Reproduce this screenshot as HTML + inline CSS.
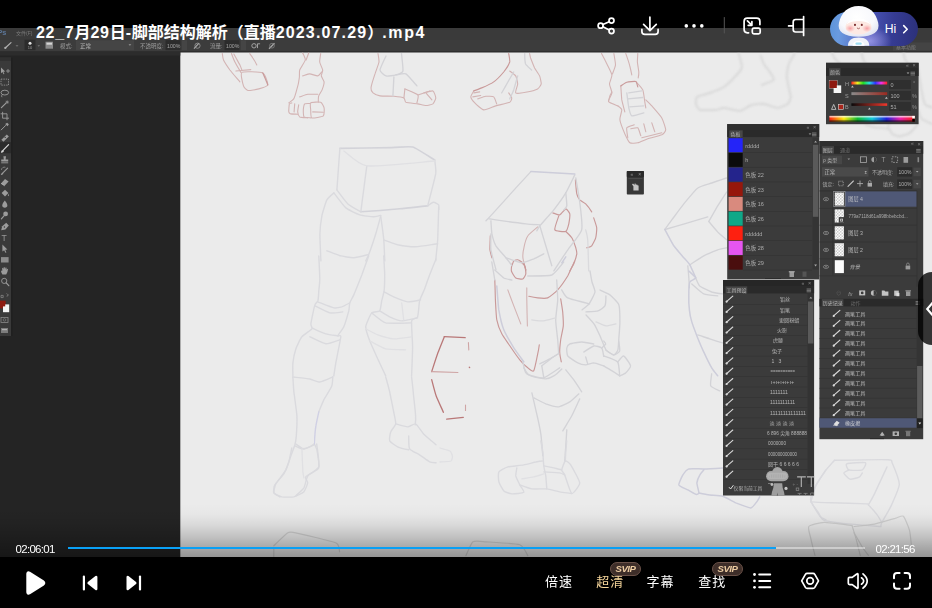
<!DOCTYPE html>
<html lang="zh-CN">
<head>
<meta charset="utf-8">
<title>22_7月29日-脚部结构解析（直播2023.07.29）.mp4</title>
<style>
html,body{margin:0;padding:0;background:#000;}
body{width:932px;height:608px;overflow:hidden;position:relative;font-family:"Liberation Sans","Noto Sans CJK SC",sans-serif;color:#fff;}
#player{position:absolute;left:0;top:0;width:932px;height:608px;overflow:hidden;background:#000;}
#video{position:absolute;left:0;top:0;width:932px;height:608px;display:block;}
.shade-b{position:absolute;left:0;top:504px;width:932px;height:53px;background:linear-gradient(to bottom,rgba(0,0,0,0) 0%,rgba(0,0,0,.02) 20%,rgba(0,0,0,.08) 40%,rgba(0,0,0,.17) 60%,rgba(0,0,0,.27) 80%,rgba(0,0,0,.37) 100%);}
.title{position:absolute;left:36px;top:22px;font-size:16px;line-height:22px;font-weight:bold;white-space:nowrap;color:#fff;}
.title span{letter-spacing:.7px;}
.title span.d{letter-spacing:1.15px;}
.title span.e{letter-spacing:1.6px;margin-left:-1px;}
.time{position:absolute;top:542px;font-size:11.5px;line-height:14px;color:#fff;white-space:nowrap;letter-spacing:-.72px;}
#t1{left:15.6px;}
#t2{left:875.6px;}
.bar{position:absolute;left:67.7px;top:546.8px;width:797px;height:2.5px;background:rgba(255,255,255,.42);}
.bar i{display:block;width:708.5px;height:2.5px;background:#0aa0f5;}
.ctl{position:absolute;font-size:13px;letter-spacing:1px;line-height:18px;top:573.3px;color:#fff;white-space:nowrap;}
.gold{color:#f7d79c;}
.svip{position:absolute;top:562px;width:29.4px;height:11.8px;border:.8px solid #6a5148;border-radius:7px;background:#3e2e29;color:#ecccA2;font-size:9.6px;line-height:12.4px;font-weight:bold;font-style:italic;text-align:center;letter-spacing:-.5px;text-indent:-.5px;}
svg.ic{position:absolute;overflow:visible;}
.handle{position:absolute;left:918.3px;top:272px;width:28px;height:72.6px;border-radius:14px;background:rgba(0,0,0,.78);}
.hi{position:absolute;left:830px;top:11.8px;width:88.2px;height:34px;border-radius:17px;overflow:hidden;background:linear-gradient(96deg,#5b93d9 0%,#6a9be0 12%,#5a78cc 30%,#454fae 50%,#363c94 70%,#2b3079 100%);}
.hi:before{content:"";position:absolute;left:18px;top:14px;width:44px;height:30px;border-radius:50%;background:radial-gradient(closest-side,rgba(170,165,240,.75),rgba(150,150,235,0));}
.hi b{position:absolute;left:54.7px;top:9.4px;font-size:12.2px;line-height:16px;font-weight:normal;color:#fff;}
.blk{position:absolute;left:0;width:932px;background:#000;}

</style>
</head>
<body>
<div id="player">
<svg id="video" width="932" height="608" viewBox="0 0 932 608" font-family="'Liberation Sans','Noto Sans CJK SC',sans-serif">
<defs>
<linearGradient id="hue" x1="0" x2="1" y1="0" y2="0"><stop offset="0" stop-color="#f22"/><stop offset=".17" stop-color="#ee2"/><stop offset=".33" stop-color="#2d2"/><stop offset=".5" stop-color="#2dd"/><stop offset=".67" stop-color="#33f"/><stop offset=".83" stop-color="#e3e"/><stop offset="1" stop-color="#f22"/></linearGradient>
<linearGradient id="sat" x1="0" x2="1" y1="0" y2="0"><stop offset="0" stop-color="#8a8a8a"/><stop offset="1" stop-color="#9a2a20"/></linearGradient>
<linearGradient id="bri" x1="0" x2="1" y1="0" y2="0"><stop offset="0" stop-color="#0a0a0a"/><stop offset="1" stop-color="#f0382c"/></linearGradient>
<linearGradient id="spec" x1="0" x2="1" y1="0" y2="0"><stop offset="0" stop-color="#f21"/><stop offset=".17" stop-color="#fe1"/><stop offset=".33" stop-color="#1b3"/><stop offset=".5" stop-color="#1cd"/><stop offset=".67" stop-color="#22d"/><stop offset=".83" stop-color="#e2a"/><stop offset="1" stop-color="#f21"/></linearGradient>
<linearGradient id="specv" x1="0" x2="0" y1="0" y2="1"><stop offset="0" stop-color="#fff" stop-opacity=".85"/><stop offset=".45" stop-color="#fff" stop-opacity="0"/><stop offset=".6" stop-color="#000" stop-opacity="0"/><stop offset="1" stop-color="#000" stop-opacity=".8"/></linearGradient>
<pattern id="chk" width="3" height="3" patternUnits="userSpaceOnUse"><rect width="1.5" height="1.5" fill="#cdcdcd"/><rect x="1.5" y="1.5" width="1.5" height="1.5" fill="#cdcdcd"/></pattern>
<clipPath id="cv"><rect x="180.3" y="52.3" width="752" height="505"/></clipPath>
<filter id="soft" color-interpolation-filters="sRGB" x="-5%" y="-5%" width="110%" height="110%"><feGaussianBlur stdDeviation=".45"/></filter>
<filter id="soft2" color-interpolation-filters="sRGB" x="-5%" y="-5%" width="110%" height="110%"><feGaussianBlur stdDeviation=".9"/></filter>
<filter id="soft3" color-interpolation-filters="sRGB" x="0" y="0" width="932" height="608" filterUnits="userSpaceOnUse"><feGaussianBlur stdDeviation=".42"/></filter>
<filter id="softg" color-interpolation-filters="sRGB" x="-5%" y="-5%" width="110%" height="110%"><feGaussianBlur stdDeviation=".6"/></filter>
</defs>
<rect x="0" y="27" width="932" height="531" fill="#ebebeb"/>
<g id="chrome" filter="url(#soft3)">
<rect x="0" y="27" width="932" height="25.3" fill="#3a3a3a" />
<rect x="0" y="40" width="932" height="11.4" fill="#3c3c3c" />
<rect x="0" y="51.3" width="932" height="1" fill="#2a2a2a" />
<rect x="0" y="52" width="180.3" height="506" fill="#242424" />
<rect x="0" y="52" width="180.3" height="3.6" fill="#2c2c2c" />
<text x="-2.6" y="35.2" font-size="7.4" fill="#6485b0" opacity=".8" text-anchor="start" font-weight="bold">Ps</text>
<text x="16" y="34.6" font-size="5" fill="#8a8a8a" opacity=".8" text-anchor="start" >文件(F)</text>
<g transform="translate(0 -.8)">
<path d="M5 49L11 43.4" stroke="#b0b0b0" stroke-width="1.2" stroke-linecap="round"/><circle cx="5.4" cy="48.6" r="1.1" fill="#b0b0b0"/>
<path d="M15.5 46l1.5 1.6 1.5-1.6z" fill="#777"/>
<rect x="24.5" y="40.5" width="11" height="10.5" fill="#2c2c2c" />
<circle cx="30" cy="44" r="1.5" fill="#e0e0e0"/>
<text x="30" y="50" font-size="4" fill="#bbb" opacity=".8" text-anchor="middle" >10</text>
<path d="M37.5 46l1.3 1.5 1.3-1.5z" fill="#777"/>
<rect x="45.5" y="42.5" width="7.5" height="7" fill="#8a8a8a" />
<rect x="46.5" y="43.5" width="5.5" height="2" fill="#d5d5d5" />
<text x="60" y="48.6" font-size="5.5" fill="#b5b5b5" opacity=".8" text-anchor="start" >模式:</text>
<rect x="76" y="41" width="58" height="10" fill="#454545" />
<text x="80" y="48.6" font-size="5.5" fill="#c8c8c8" opacity=".8" text-anchor="start" >正常</text>
<path d="M128.5 45l1.4 1.6 1.4-1.6z" fill="#999"/>
<text x="140" y="48.6" font-size="5.5" fill="#b5b5b5" opacity=".8" text-anchor="start" >不透明度:</text>
<rect x="165.5" y="41" width="15" height="10" fill="#2c2c2c" />
<text x="167" y="48.6" font-size="5.2" fill="#c0c0c0" opacity=".8" text-anchor="start" >100%</text>
<rect x="182" y="41" width="5" height="10" fill="#454545" />
<path d="M194 49.5l5-5.5" stroke="#aaa" stroke-width="1.2"/><circle cx="197.5" cy="46.5" r="2.6" fill="none" stroke="#999" stroke-width=".8"/>
<text x="210" y="48.6" font-size="5.5" fill="#b5b5b5" opacity=".8" text-anchor="start" >流量:</text>
<rect x="224.5" y="41" width="15" height="10" fill="#2c2c2c" />
<text x="226" y="48.6" font-size="5.2" fill="#c0c0c0" opacity=".8" text-anchor="start" >100%</text>
<rect x="241" y="41" width="5" height="10" fill="#454545" />
<circle cx="254" cy="46.6" r="2.2" fill="none" stroke="#aaa" stroke-width=".9"/><path d="M257.5 44.5v4.4M257.5 44.6h2.6" stroke="#aaa" stroke-width=".9"/>
<path d="M269 49.5l5.5-5.5" stroke="#aaa" stroke-width="1.3"/><circle cx="272" cy="46.5" r="2.4" fill="none" stroke="#888" stroke-width=".7"/>
</g>
<rect x="893" y="42.5" width="39" height="8" fill="#444" />
<text x="896" y="48.6" font-size="5" fill="#8f8f8f" opacity=".8" text-anchor="start" >基本功能</text>
<rect x="0" y="57.6" width="11.3" height="278.4" fill="#3a3a3a" />
<rect x="0" y="57.6" width="11.3" height="3.2" fill="#303030" />
<rect x="11.3" y="57.6" width="0.9" height="278.4" fill="#1d1d1d" />
<rect x="0" y="142.2" width="11" height="11" fill="#2b2b2b" />
<path d="M1 67.5l4.2 4-1.8.2 1 2.2-.9.4-1-2.2-1.5 1.2z" fill="#9c9c9c"/><path d="M6 71.0h4M8 69.0v4" stroke="#9c9c9c" stroke-width=".8"/>
<rect x="1" y="79.1" width="7.5" height="6" fill="none" stroke="#9c9c9c" stroke-width=".8" stroke-dasharray="1.4 1"/>
<ellipse cx="4.8" cy="92.60000000000001" rx="3.8" ry="2.4" fill="none" stroke="#9c9c9c" stroke-width=".9"/><path d="M2.4 94.4q-1.6 1.6-.4 2.8" stroke="#9c9c9c" stroke-width=".8" fill="none"/>
<path d="M1.4 107.7L6 103.1" stroke="#9c9c9c" stroke-width="1.2" stroke-linecap="round"/><path d="M7.2 100.3v3.6M5.4 102.1h3.6M6 100.89999999999999l2.4 2.4M8.4 100.89999999999999l-2.4 2.4" stroke="#9c9c9c" stroke-width=".6"/>
<path d="M2.6 111.80000000000001v6.4h6.4M.6 113.80000000000001h6.4v6.4" stroke="#9c9c9c" stroke-width=".9" fill="none"/>
<path d="M1.2 129.9l4.4-4.4" stroke="#9c9c9c" stroke-width="1" stroke-linecap="round"/><path d="M5.2 123.9l2.4 2.4 1.2-2-1.6-1.6z" fill="#9c9c9c"/>
<path d="M1.4 139.79999999999998l5.4-5.4 2 2-5.4 5.4z" fill="#9c9c9c"/><circle cx="5.2" cy="137.4" r=".7" fill="#3a3a3a"/>
<path d="M3 150.29999999999998L8.6 144.7" stroke="#d8d8d8" stroke-width="1.2" stroke-linecap="round"/><path d="M.8 152.7q.2-2.6 2.2-2.8l1 1q-.4 2-3.2 1.8z" fill="#d8d8d8"/>
<path d="M3.4 156.20000000000002h2.6l-.4 3.2h2.6v2h-7v-2h2.6z" fill="#9c9c9c"/><path d="M1.2 162.8h7" stroke="#9c9c9c" stroke-width=".9"/>
<path d="M2.4 173.3L7.6 168.1" stroke="#9c9c9c" stroke-width="1.1" stroke-linecap="round"/><path d="M.8 174.9q.2-2 1.8-2.2l.8.8q-.4 1.6-2.6 1.4z" fill="#9c9c9c"/><path d="M1.4 169.9a3 3 0 0 1 4-2.6" stroke="#9c9c9c" stroke-width=".7" fill="none"/>
<path d="M1 183.4l4-4.4 3.6 2.4-4 4.4z" fill="#9c9c9c"/><path d="M1 183.4l3.6 2.4" stroke="#d0d0d0" stroke-width=".6"/>
<path d="M1.6 193.1l3.4-3.4 3.4 3.4-3.4 3.4z" fill="#9c9c9c"/><path d="M8.4 193.7q1.2 1.6 0 2.6q-1.2-1 0-2.6z" fill="#9c9c9c"/>
<path d="M4.8 200.39999999999998q3.6 4.4 2.2 6.4q-2.2 2-4.4 0q-1.4-2 2.2-6.4z" fill="#9c9c9c"/>
<circle cx="5.6" cy="213.9" r="2.4" fill="#9c9c9c"/><path d="M1.4 218.9l2.6-3" stroke="#9c9c9c" stroke-width="1.2" stroke-linecap="round"/>
<path d="M1.2 230.20000000000002l1-4 4-3.4 2.6 2.6-3.4 4z" fill="#9c9c9c"/><circle cx="4.4" cy="227.0" r=".7" fill="#3a3a3a"/>
<text x="1.6" y="240.7" font-size="8.6" fill="#b0b0b0" opacity=".8" text-anchor="start" >T</text>
<path d="M2.4 244.6l5 5-2.2.2 1.2 2.6-1 .4-1.2-2.6-1.8 1.4z" fill="#9c9c9c"/>
<rect x="1" y="257.09999999999997" width="7.6" height="5.4" fill="#8c8c8c"/>
<path d="M2.4 274.6q-1.6-2.4-1.4-4l1.2.4v-3l1-.2.2 1.6.4-2.2 1 0 .2 2.2.6-1.8 1 .2-.2 2.2.8-1.2.8.4q-.4 3.400-1.800 5.400z" fill="#9c9c9c"/>
<circle cx="4.2" cy="280.9" r="2.6" fill="none" stroke="#9c9c9c" stroke-width=".9"/><path d="M6.200 282.9l2.600 2.800" stroke="#9c9c9c" stroke-width="1.2" stroke-linecap="round"/>
<path d="M1 295.400h2.200v2.200h-2.200zM6.600 293.400l1.400 1.400M6.600 296.200q1.800 0 1.600-1.600" stroke="#9a9a9a" stroke-width=".6" fill="none"/>
<rect x="0" y="300.8" width="5.6" height="7.6" fill="#8d1a10" />
<rect x="3" y="304.4" width="6.2" height="7.8" fill="#f4f4f4" />
<rect x="0" y="300.8" width="5.2" height="5.6" fill="#8d1a10" />
<rect x="1" y="317.4" width="7" height="5" fill="none" stroke="#8a8a8a" stroke-width=".8"/>
<circle cx="4.500" cy="319.900" r="1.300" fill="none" stroke="#8a8a8a" stroke-width=".6"/>
<rect x="1" y="328" width="7" height="5" fill="#7c7c7c" />
<rect x="2" y="329" width="5" height="1.2" fill="#b0b0b0" />
</g>
<g id="drawing" fill="none" stroke-linecap="round" stroke-linejoin="round" clip-path="url(#cv)">
<g stroke="#d3b4b4" stroke-width="1.1" filter="url(#soft)">
<path d="M222.3 53.6C222.4 54.2 222.8 58.5 223.5 60.0C224.2 61.5 228.4 67.9 229.9 70.0C231.4 72.0 239.0 80.8 239.9 81.9"/>
<path d="M231.5 53.6C231.8 54.4 234.0 60.3 234.9 62.0C235.7 63.7 240.3 71.4 240.9 72.4"/>
<path d="M233.9 54.0C234.4 55.0 239.1 63.5 239.9 65.0C240.6 66.4 241.7 69.5 241.9 70.0"/>
<path d="M249.8 53.6C250.1 54.0 252.2 56.9 252.8 58.0C253.5 59.0 256.5 64.3 256.8 65.0"/>
<path d="M235.9 71.0 L250.8 69.6"/>
<path d="M241.9 72.4C243.6 71.2 260.4 71.8 262.8 72.9C265.2 74.1 268.2 83.5 267.8 84.9C267.4 86.4 260.7 88.4 258.8 88.9C257.0 89.4 249.3 90.8 247.9 90.5C246.4 90.2 244.0 87.6 243.5 85.9C242.9 84.3 240.1 73.5 241.9 72.4"/>
<path d="M302.7 53.0C303.0 53.6 305.6 58.4 305.3 60.0C305.0 61.5 300.3 68.3 299.7 70.0C299.2 71.6 299.6 76.1 299.3 77.9C299.1 79.8 297.3 88.0 296.7 89.9C296.2 91.8 294.5 97.7 293.7 98.9C293.0 100.1 289.2 102.5 288.8 102.9"/>
<path d="M308.7 53.0 L306.1 60.0"/>
<path d="M320.7 53.6C320.6 54.4 319.5 60.5 319.7 62.0C319.9 63.5 322.5 68.7 322.7 70.0C322.8 71.2 321.2 74.8 321.3 75.9C321.4 77.0 324.0 80.6 324.1 81.9C324.2 83.2 322.6 88.6 322.1 89.9C321.6 91.2 319.0 94.8 318.7 95.9C318.3 97.0 318.3 101.7 318.3 102.3"/>
<path d="M302.7 75.9C303.4 75.8 308.3 73.9 309.7 73.9C311.1 73.9 316.6 76.1 317.7 75.9C318.8 75.8 321.3 72.3 321.7 72.0"/>
<path d="M299.7 96.9C300.5 96.7 306.1 94.5 307.7 94.3C309.4 94.1 316.8 94.3 317.7 94.3"/>
<path d="M310.7 102.9C311.6 102.2 319.5 101.8 320.7 102.3C321.9 102.7 323.8 106.6 324.1 107.9C324.3 109.1 324.4 114.9 323.3 115.9C322.2 116.8 312.9 118.4 311.7 117.9C310.6 117.3 310.8 111.2 310.7 109.9C310.6 108.5 309.8 103.6 310.7 102.9"/>
<path d="M312.7 111.9 L323.3 112.3"/>
<path d="M309.7 103.5C309.3 103.5 305.3 103.3 304.7 103.9C304.1 104.5 303.4 108.7 303.3 109.9C303.3 111.1 303.5 116.1 304.1 116.9C304.8 117.6 310.1 117.8 310.7 117.9"/>
<path d="M298.7 104.9C298.6 105.5 297.6 110.8 297.7 111.9C297.8 113.0 298.8 116.3 299.7 116.9C300.7 117.4 307.0 117.8 307.7 117.9"/>
<path d="M291.8 102.9C291.5 103.0 289.6 103.1 289.4 103.9C289.1 104.7 288.6 110.9 288.8 111.9C288.9 112.8 289.9 113.6 290.8 113.9C291.6 114.1 297.1 114.2 297.7 114.3"/>
<path d="M294.7 103.9 L294.1 111.9"/>
<path d="M378.0 53.6C378.1 54.4 379.2 60.1 379.0 62.0C378.7 63.8 375.7 71.6 375.0 73.9C374.2 76.3 371.2 86.2 371.0 87.9C370.8 89.7 372.2 92.2 373.0 92.9C373.8 93.6 378.0 95.6 380.0 95.9C381.9 96.2 391.7 96.1 393.9 96.3C396.1 96.5 402.8 97.3 403.9 97.9C405.0 98.4 404.6 101.7 405.9 102.3C407.2 102.8 416.1 103.6 417.9 103.9C419.7 104.2 424.5 105.5 425.9 105.5C427.2 105.5 431.9 104.6 432.9 103.9C433.8 103.2 435.8 99.1 435.8 97.9C435.8 96.7 434.0 91.4 432.9 90.9C431.8 90.5 424.7 92.7 423.9 92.9"/>
<path d="M404.9 88.9 L403.9 97.9"/>
<path d="M404.9 88.9C406.1 89.5 416.8 93.6 417.9 94.9C419.0 96.2 417.0 102.2 416.9 102.9"/>
<path d="M417.9 94.9 L429.9 90.9"/>
<path d="M425.9 92.9 L431.9 99.9"/>
<path d="M473.8 90.9C473.5 91.5 470.7 95.8 470.8 96.9C470.9 98.0 473.6 101.7 474.8 102.9C475.9 104.1 481.8 109.6 483.7 109.9C485.7 110.1 493.3 106.6 495.7 105.9C498.1 105.2 508.2 103.0 509.7 102.3C511.1 101.6 511.8 98.8 511.7 97.9C511.6 97.0 509.0 93.4 508.7 92.9"/>
<path d="M473.8 92.9 L479.7 91.9"/>
<path d="M472.8 96.9 L480.7 95.5"/>
<path d="M477.8 98.9C478.5 98.7 484.3 96.5 485.7 96.3C487.2 96.1 492.7 96.2 493.7 96.9C494.7 97.6 496.4 103.2 496.7 103.9"/>
<path d="M509.7 71.0C510.2 71.4 514.9 74.8 515.7 75.9C516.4 77.1 517.7 82.4 517.7 83.9C517.7 85.5 514.9 92.1 515.7 92.9C516.4 93.7 523.6 92.7 525.6 92.3C527.7 91.9 536.2 89.7 537.6 88.9C539.0 88.1 541.0 85.1 541.2 83.9C541.4 82.7 540.2 77.4 539.6 75.9C539.0 74.5 535.5 69.6 534.6 68.0C533.8 66.3 531.1 59.3 530.6 58.0C530.2 56.7 529.7 54.0 529.6 53.6"/>
<path d="M601.5 53.6C602.0 54.5 605.9 62.0 606.9 64.0C607.8 65.9 611.6 73.1 611.9 74.9C612.1 76.8 609.5 82.3 609.5 83.9C609.5 85.6 612.0 91.3 611.9 92.9C611.8 94.5 607.9 100.3 608.5 101.5C609.0 102.7 617.0 105.5 617.9 105.9"/>
<path d="M613.9 53.6C614.0 54.6 615.6 63.1 615.5 65.0C615.3 66.8 612.7 73.1 612.5 73.9"/>
<path d="M625.8 53.6C626.2 54.7 629.3 64.0 629.8 66.0C630.4 67.9 631.6 74.1 631.8 74.9"/>
<path d="M637.8 53.6C637.8 54.4 637.3 60.3 637.4 62.0C637.5 63.7 638.7 70.5 638.8 72.0C638.9 73.4 638.3 77.4 638.2 77.9"/>
<path d="M620.8 85.9C620.9 87.2 621.5 97.5 621.8 99.9C622.2 102.3 624.6 110.8 624.8 111.9"/>
<path d="M635.8 81.5C636.5 82.3 642.0 88.0 642.8 89.9C643.6 91.8 644.5 100.2 644.8 101.9C645.1 103.5 645.7 107.3 645.8 107.9"/>
<path d="M608.5 101.5C608.6 101.0 609.6 96.8 609.9 95.9C610.2 95.0 611.7 92.3 611.9 91.9"/>
<path d="M617.9 105.9C618.2 106.2 621.7 108.6 621.8 109.9C622.0 111.1 619.6 117.7 619.9 119.8C620.1 122.0 623.9 131.7 624.8 133.8C625.8 135.9 628.6 142.0 629.8 142.8C631.0 143.6 636.2 143.2 637.8 142.8C639.5 142.4 645.6 139.5 647.8 138.8C650.0 138.1 660.1 135.6 661.8 134.8C663.4 134.0 665.7 131.4 665.7 129.8C665.7 128.3 663.0 120.0 661.8 117.9C660.5 115.7 653.2 107.5 651.8 105.9C650.3 104.2 646.3 100.4 645.8 99.9"/>
<path d="M634.2 124.8C633.5 125.1 627.4 126.6 626.8 127.8C626.2 129.0 627.7 136.9 627.8 137.8"/>
<path d="M630.8 128.8C631.5 128.7 636.9 127.2 637.8 127.8C638.7 128.5 640.5 135.1 640.8 135.8"/>
<path d="M643.8 123.8 L645.8 131.8"/>
<path d="M651.8 122.8 L654.8 131.8"/>
<path d="M641.8 137.8 L661.8 132.8"/>
<path d="M537.8 226.8C536.9 227.7 529.1 233.9 527.9 235.8C526.6 237.7 524.3 245.8 523.9 247.8C523.4 249.8 522.7 255.6 522.9 257.8C523.1 259.9 525.6 269.7 525.9 270.9"/>
<path d="M507.8 289.9C508.4 291.4 512.6 302.8 513.8 305.9C515.0 309.0 520.1 322.2 520.8 323.9"/>
<path d="M526.8 287.9C526.8 289.0 526.7 296.4 526.8 299.9C526.8 303.4 527.3 323.5 527.4 325.9"/>
</g>
<g stroke="#c99999" stroke-width="1.15" filter="url(#soft)">
<path d="M262.8 72.9C263.1 73.6 265.4 78.8 265.8 79.9C266.3 81.0 267.6 84.5 267.8 84.9"/>
<path d="M508.7 53.6C508.8 54.4 510.1 60.3 509.7 62.0C509.2 63.7 505.2 70.1 503.7 72.0C502.2 73.8 495.7 80.5 493.7 81.9C491.7 83.4 483.6 87.1 481.7 87.9C479.9 88.7 474.5 90.6 473.8 90.9"/>
<path d="M620.8 85.9C621.4 85.6 625.5 82.7 626.8 82.3C628.2 81.9 634.8 81.1 635.8 81.5C636.8 82.0 637.6 86.4 637.8 86.9"/>
<path d="M575.4 179.9C575.5 181.2 576.4 192.1 576.8 193.9C577.2 195.7 578.9 199.0 579.7 199.9C580.6 200.8 584.6 202.8 585.7 203.9C586.8 205.0 591.2 211.1 591.7 211.9"/>
<path d="M593.7 217.9C594.0 218.8 596.5 226.0 596.7 227.8C596.9 229.7 596.2 236.2 595.7 237.8C595.3 239.5 592.5 244.9 591.7 245.8C590.9 246.7 587.2 247.6 586.7 247.8"/>
<path d="M552.8 212.9C553.4 213.0 558.6 215.2 559.8 214.9C561.0 214.5 564.9 209.0 565.8 208.9C566.7 208.8 569.5 212.5 569.8 213.9C570.0 215.2 569.1 222.2 568.8 223.8C568.4 225.4 567.1 230.9 565.8 231.4C564.5 232.0 555.4 231.3 554.8 229.8C554.2 228.4 558.4 217.1 558.8 215.9"/>
<path d="M565.8 231.4C566.3 232.0 570.9 236.3 571.8 237.8C572.7 239.3 575.3 246.3 575.8 247.8C576.2 249.2 576.9 252.3 576.8 253.8C576.6 255.2 574.4 262.2 573.8 263.7C573.1 265.3 570.1 270.3 569.8 270.9"/>
<path d="M490.3 235.8C490.3 237.1 489.8 247.8 489.9 249.8C490.1 251.8 491.8 257.0 491.9 257.8"/>
<path d="M511.9 265.7C512.1 265.3 513.3 261.3 513.9 260.8C514.4 260.2 517.0 259.5 517.9 259.8C518.8 260.0 523.1 262.8 523.9 263.7C524.6 264.7 525.7 269.2 525.9 269.7"/>
<path d="M511.8 264.0C511.8 264.6 511.0 269.7 511.4 271.0C511.8 272.3 514.7 277.2 515.8 278.0C516.8 278.7 521.9 279.3 522.8 279.0C523.7 278.6 525.6 275.2 525.8 274.0C526.0 272.8 525.3 267.2 524.8 266.0C524.2 264.8 520.2 261.5 519.8 261.0"/>
<path d="M494.8 280.0C494.9 281.8 495.3 296.3 495.4 299.9C495.6 303.6 496.2 316.8 496.8 319.9C497.4 323.0 500.6 331.5 501.8 333.8C503.0 336.2 508.2 343.4 509.8 345.8C511.4 348.2 518.1 357.8 519.8 359.8C521.4 361.8 526.5 366.8 527.8 367.8C529.0 368.8 532.8 372.0 533.7 370.8C534.7 369.5 537.2 356.2 537.7 353.8C538.3 351.4 539.2 345.6 539.3 344.8"/>
<path d="M574.7 261.0C574.0 262.4 569.2 273.3 567.7 276.0C566.1 278.6 559.5 287.9 557.7 289.9C555.9 291.9 549.5 297.2 547.7 297.9C545.9 298.6 539.5 298.1 537.7 297.9C536.0 297.8 529.6 296.5 528.8 296.3"/>
<path d="M560.7 298.9C560.9 300.1 562.4 309.4 562.7 311.9C562.9 314.4 563.5 323.3 563.3 325.9C563.1 328.4 561.0 337.4 560.7 339.8C560.4 342.2 559.6 349.8 559.7 351.8C559.7 353.8 561.1 360.9 561.3 361.8"/>
</g>
<g stroke="#d3d3d7" stroke-width="1.35" filter="url(#softg)">
<path d="M386.0 56.0C385.4 57.3 380.0 68.1 380.0 70.0C380.0 71.8 384.5 75.5 386.0 75.9C387.4 76.4 394.4 75.4 395.9 74.9C397.5 74.5 402.4 72.9 402.9 71.0C403.4 69.0 401.6 55.2 401.5 53.6"/>
<path d="M393.9 76.9 L392.9 95.9"/>
<path d="M395.9 74.9C396.8 74.9 404.0 72.9 405.9 73.9C407.8 75.0 415.9 84.8 416.9 85.9"/>
<path d="M524.7 53.6C524.7 54.5 525.0 62.5 525.6 64.0C526.3 65.5 531.1 69.4 531.6 70.0"/>
<path d="M513.7 72.0C512.9 73.2 506.8 84.0 505.7 85.9C504.6 87.8 502.1 92.3 501.7 92.9"/>
<path d="M517.7 75.9C517.3 77.2 514.4 87.8 513.7 89.9C512.9 92.0 510.0 98.1 509.7 98.9"/>
<path d="M626.8 92.9C627.0 94.3 628.4 105.8 628.8 107.9C629.3 110.0 630.5 115.4 631.8 115.9C633.2 116.3 642.7 113.1 643.8 112.9"/>
<path d="M628.8 92.9 L641.8 90.9"/>
<path d="M627.8 98.9 L642.8 97.5"/>
<path d="M629.8 106.9 L643.8 105.9"/>
<path d="M530.9 171.6C529.5 173.1 518.9 184.6 515.9 187.9C512.9 191.2 500.7 204.9 497.9 207.9C495.2 210.9 487.1 219.7 486.0 220.8"/>
<path d="M488.9 218.8C489.6 218.9 492.5 219.4 495.9 219.8C499.3 220.3 521.8 223.4 525.9 223.8C529.9 224.3 538.6 224.7 539.8 224.8"/>
<path d="M574.8 174.9C573.9 176.6 567.7 189.7 565.8 192.9C563.9 196.1 556.2 206.8 553.8 209.9C551.4 212.9 541.4 223.9 539.8 225.8C538.3 227.8 537.1 230.4 536.8 230.8"/>
<path d="M490.9 220.8C491.0 222.0 491.5 231.5 491.9 233.8C492.4 236.1 494.7 243.6 495.9 245.8C497.2 248.0 504.4 255.9 505.9 257.8C507.4 259.6 511.4 265.0 511.9 265.7"/>
<path d="M490.9 233.8C490.9 235.3 490.5 246.5 490.9 249.8C491.4 253.1 495.5 267.9 495.9 269.7"/>
<path d="M575.8 177.9C576.1 180.1 579.2 197.1 579.7 201.9C580.3 206.6 582.8 225.4 581.7 229.8C580.6 234.2 570.3 246.0 567.8 249.8C565.2 253.5 555.1 269.0 553.8 270.9"/>
<path d="M565.8 192.9C565.9 194.1 567.0 204.3 566.8 205.9C566.6 207.4 564.1 209.5 563.8 209.9"/>
<path d="M539.8 225.8C540.4 227.7 544.7 242.1 545.8 245.8C546.9 249.4 551.3 263.9 551.8 265.7"/>
<path d="M505.9 257.8C507.4 258.2 519.3 262.7 521.9 262.8C524.4 262.8 531.8 259.6 533.9 258.8C535.9 257.9 542.9 254.2 543.8 253.8"/>
<path d="M527.8 276.0C530.0 275.9 548.4 276.2 551.7 275.0C555.0 273.7 562.6 263.2 563.7 262.0"/>
<path d="M556.7 280.0C556.8 281.8 557.8 296.3 557.7 299.9C557.6 303.6 555.7 316.2 555.7 319.9C555.7 323.5 557.4 336.7 557.7 339.8C558.0 342.9 558.6 352.5 558.7 353.8"/>
<path d="M523.8 367.8C524.2 368.4 526.9 373.8 528.8 374.7C530.6 375.7 540.9 378.4 543.7 377.7C546.6 377.1 558.2 368.7 559.7 367.8"/>
<path d="M539.7 363.8C540.7 363.3 548.0 359.7 549.7 358.8C551.5 357.9 557.9 354.3 558.7 353.8"/>
<path d="M491.8 262.0 L494.8 280.0"/>
<path d="M494.8 270.0C495.7 270.7 502.3 277.0 503.8 278.0C505.4 278.9 511.1 279.8 511.8 280.0"/>
<path d="M589.6 303.9C587.6 303.4 570.2 299.2 567.7 297.9C565.1 296.6 562.2 290.7 561.7 289.9"/>
<path d="M522.9 362.0C523.1 363.0 524.9 371.6 525.9 372.9C526.9 374.3 532.0 376.4 533.9 376.9C535.7 377.5 544.0 379.0 545.8 378.9C547.7 378.8 552.3 376.8 553.8 375.9C555.3 375.0 561.1 369.6 561.8 368.9"/>
<path d="M541.8 365.9C542.7 365.2 550.3 359.1 551.8 358.0C553.3 356.9 557.2 354.3 557.8 354.0"/>
<path d="M541.8 365.9 L543.8 377.9"/>
<path d="M531.9 392.9C532.2 394.4 535.0 406.1 535.8 409.8C536.7 413.6 540.2 429.6 540.8 433.8C541.5 438.0 542.6 453.7 542.8 455.7"/>
<path d="M565.8 369.9C566.5 370.8 572.3 377.9 573.8 379.9C575.2 381.9 581.0 390.8 581.7 391.9"/>
<path d="M579.7 398.9C579.0 400.4 573.3 412.9 571.8 415.8C570.2 418.8 563.6 429.4 562.8 430.8"/>
<path d="M533.9 397.9C534.9 398.4 543.6 403.0 545.8 403.9C548.0 404.7 555.6 407.0 557.8 406.9C560.0 406.7 567.9 403.1 569.8 401.9C571.7 400.7 577.9 394.6 578.8 393.9"/>
<path d="M566.8 429.8C566.7 431.3 566.0 442.9 565.8 445.8C565.6 448.6 564.9 459.5 564.8 460.9"/>
<path d="M593.7 344.0C592.6 343.8 583.9 342.0 581.7 342.0C579.6 342.0 571.1 343.4 569.8 344.0C568.4 344.5 567.0 346.9 566.8 348.0C566.6 349.1 566.8 354.6 567.8 356.0C568.8 357.3 576.1 362.1 577.8 362.9C579.4 363.8 584.3 364.9 585.7 364.9C587.2 364.9 592.1 362.9 593.7 362.9C595.4 363.0 602.8 365.7 603.7 365.9"/>
<path d="M583.7 352.0C584.7 351.4 592.1 346.4 593.7 346.0C595.4 345.6 600.8 347.1 601.7 348.0C602.6 348.9 603.5 355.2 603.7 356.0"/>
<path d="M585.7 357.0 L587.7 363.9"/>
<path d="M601.7 348.0C602.1 347.6 605.5 344.6 605.7 344.0C605.9 343.4 603.9 341.3 603.7 341.0"/>
<path d="M603.7 356.0C605.0 356.5 616.2 360.1 617.7 362.0C619.1 363.8 619.5 374.6 619.7 375.9"/>
<path d="M603.7 365.9C604.6 366.5 612.2 371.0 613.7 371.9C615.1 372.8 619.1 375.6 619.7 375.9"/>
<path d="M617.7 362.0C618.2 361.4 622.5 355.6 623.7 356.0C624.8 356.3 630.5 364.4 630.6 365.9C630.8 367.5 626.7 372.0 625.6 372.9C624.6 373.8 620.2 375.6 619.7 375.9"/>
<path d="M605.7 350.0C606.4 350.4 612.4 354.9 613.7 355.0C615.0 355.1 619.2 352.3 619.7 351.0C620.1 349.7 618.8 341.9 618.7 341.0"/>
<path d="M726.7 178.0C725.3 178.4 714.4 182.1 711.8 183.0C709.1 183.9 700.3 186.0 697.8 188.0C695.2 189.9 686.2 201.0 683.8 203.9C681.4 206.9 673.6 217.5 671.8 219.9C670.1 222.2 665.5 228.6 664.9 229.5"/>
<path d="M664.9 229.5C667.0 228.9 683.9 224.0 687.8 222.9C691.7 221.7 705.9 217.4 707.8 216.9"/>
<path d="M708.8 221.5C709.6 220.1 716.1 208.6 717.7 205.9C719.4 203.2 725.9 193.2 726.7 192.0"/>
<path d="M708.8 221.5C709.6 222.4 716.1 230.2 717.7 231.9C719.4 233.5 725.9 239.1 726.7 239.8"/>
<path d="M689.8 264.8C691.1 264.0 701.2 257.2 703.8 255.8C706.3 254.4 715.6 250.6 717.7 249.8C719.8 249.1 725.9 248.0 726.7 247.8"/>
<path d="M687.8 265.8C687.9 266.9 688.7 275.8 688.8 277.8C689.0 279.8 689.3 286.8 689.4 287.7"/>
<path d="M695.7 278.0C696.1 278.7 698.3 284.7 699.7 286.0C701.2 287.2 709.6 291.2 711.7 292.0C713.8 292.7 721.7 293.8 722.7 293.9"/>
<path d="M691.8 284.0C692.9 284.9 701.3 292.8 703.7 293.9C706.1 295.0 716.4 295.8 717.7 295.9"/>
<path d="M697.7 334.9C698.8 335.2 707.4 338.1 709.7 338.8C712.0 339.6 721.5 342.5 722.7 342.8"/>
<path d="M711.7 373.8C711.6 374.9 710.0 384.2 710.7 385.7C711.4 387.3 718.9 390.5 719.7 390.9"/>
<path d="M590.0 271.0C590.2 272.0 591.5 280.1 592.0 282.0C592.4 283.9 595.2 289.9 595.0 292.0C594.7 294.0 590.2 302.3 589.0 303.9C587.8 305.6 582.6 309.4 582.0 309.9"/>
<path d="M600.0 290.0C600.9 290.4 608.2 293.6 609.9 294.9C611.7 296.3 618.0 302.5 618.9 304.9C619.8 307.4 619.9 318.9 619.9 321.9C619.9 324.9 619.1 335.3 618.9 337.9C618.7 340.4 618.4 348.3 617.9 349.8C617.5 351.4 615.0 354.8 613.9 354.8C612.8 354.8 607.2 351.6 605.9 349.8C604.7 348.1 601.1 338.2 600.0 335.9C598.9 333.5 595.2 325.8 594.0 323.9C592.7 322.0 586.7 315.7 586.0 314.9"/>
<path d="M605.9 295.9C605.9 296.9 605.7 304.5 604.9 305.9C604.2 307.3 599.7 310.4 598.0 310.9C596.2 311.5 587.1 311.8 586.0 311.9"/>
</g>
<g stroke="#d6d6d6" stroke-width="1.7" filter="url(#soft2)">
<path d="M738.9 53.6C739.1 54.4 740.6 60.7 740.9 62.0C741.1 63.3 742.5 66.5 741.9 68.0C741.2 69.4 735.5 76.2 733.9 77.9C732.2 79.7 726.1 85.5 723.9 86.9C721.7 88.3 712.4 92.0 709.9 92.9C707.5 93.8 698.2 95.9 697.0 96.9C695.7 97.9 695.7 102.7 696.0 103.9C696.2 105.1 698.1 109.3 700.0 109.9C701.8 110.4 713.7 110.1 715.9 109.9C718.1 109.7 721.7 107.8 723.9 107.9C726.1 108.0 737.3 111.1 739.9 110.9C742.4 110.6 749.6 105.5 751.8 104.9C754.0 104.2 761.4 103.6 763.8 103.9C766.2 104.2 775.6 107.9 777.8 107.9C780.0 107.9 786.6 104.9 787.8 103.9C789.0 102.9 790.7 98.4 790.8 96.9C790.8 95.4 789.1 89.8 788.8 87.9C788.4 86.0 786.8 78.1 786.8 75.9C786.8 73.7 788.0 66.0 788.8 64.0C789.5 61.9 794.2 54.5 794.7 53.6"/>
<path d="M760.8 56.0C761.1 56.7 763.0 62.5 763.8 64.0C764.6 65.4 768.9 70.5 769.8 72.0C770.7 73.4 774.5 78.7 773.8 79.9C773.1 81.1 762.9 84.5 761.8 84.9"/>
<path d="M832.1 53.0C832.3 53.4 833.8 57.3 834.5 58.2C835.2 59.2 839.0 62.7 839.5 63.2"/>
<path d="M861.6 53.0C861.8 53.6 862.9 58.9 863.3 59.9C863.7 60.8 865.5 62.9 865.8 63.2"/>
<path d="M903.6 53.0C903.7 53.6 904.8 58.9 905.2 59.9C905.7 60.8 908.2 62.9 908.5 63.2"/>
<path d="M917.5 66.4C917.9 68.7 921.0 87.6 921.7 91.1C922.3 94.6 924.0 102.7 924.9 104.2C925.9 105.8 931.4 107.2 932.0 107.5"/>
<path d="M918.4 110.8C918.7 111.6 920.4 117.8 921.7 119.0C922.9 120.3 931.1 123.5 932.0 124.0"/>
<path d="M865.8 124.8C866.5 125.0 871.9 126.9 874.0 127.3C876.1 127.6 887.1 128.3 888.8 128.9C890.4 129.5 891.2 133.2 892.1 133.8C893.0 134.5 897.1 136.3 898.6 136.3C900.1 136.3 906.8 134.8 908.5 133.8C910.2 132.9 915.8 126.7 916.7 125.6C917.6 124.6 918.2 122.6 918.4 122.3"/>
<path d="M888.8 124.0 L888.0 128.9"/>
</g>
<g stroke="#d3d3d9" stroke-width="1.6" filter="url(#softg)">
<path d="M339.9 148.4C344.6 148.3 385.1 147.7 391.8 147.6C398.4 147.5 408.8 145.9 412.7 147.0C416.6 148.1 432.6 158.8 434.7 160.0"/>
<path d="M360.8 211.8C364.4 211.6 393.6 209.4 399.7 208.8C405.9 208.3 425.1 206.1 427.7 205.9"/>
</g>
<g stroke="#dadade" stroke-width="1.4" filter="url(#softg)">
<path d="M339.9 148.4C339.7 150.9 338.1 172.1 337.9 175.9C337.6 179.7 337.0 188.6 336.9 189.9"/>
<path d="M366.8 165.9 L360.8 211.8"/>
<path d="M434.7 160.0C434.8 161.2 436.3 169.7 435.7 173.9C435.0 178.1 428.4 202.9 427.7 205.9"/>
<path d="M336.9 189.9C337.9 191.2 345.7 201.8 347.9 203.9C350.0 205.9 359.6 211.1 360.8 211.8"/>
<path d="M427.7 205.9C428.2 205.5 432.7 202.4 433.7 202.3C434.7 202.2 438.2 204.2 438.7 204.9C439.1 205.6 438.7 209.4 438.7 209.8"/>
<path d="M438.7 206.9C438.6 209.9 437.9 234.8 437.7 239.8C437.4 244.7 435.8 259.0 435.7 260.9"/>
<path d="M333.9 192.9C333.2 193.5 328.0 197.8 326.9 199.9C325.8 202.0 322.5 212.7 321.9 215.8C321.3 218.9 320.0 229.7 319.9 233.8C319.8 237.9 320.8 258.4 320.9 260.9"/>
<path d="M333.9 192.9C335.0 194.3 343.5 205.8 345.9 207.9C348.2 209.9 357.3 214.0 359.8 214.8C362.4 215.7 371.9 216.8 373.8 216.8C375.7 216.9 380.1 215.6 380.8 215.4"/>
<path d="M380.8 215.8C380.3 217.5 376.8 230.5 375.8 233.8C374.8 237.1 370.7 249.3 369.8 251.8C368.9 254.2 366.2 260.1 365.8 260.9"/>
<path d="M380.8 216.8C381.1 218.9 383.4 235.7 383.8 239.8C384.1 243.8 384.7 259.0 384.8 260.9"/>
<path d="M326.9 250.8C328.1 251.2 337.4 255.1 339.9 255.7C342.3 256.4 351.3 257.8 353.8 257.7C356.4 257.6 366.5 255.0 367.8 254.7"/>
<path d="M383.8 239.8C385.1 240.2 394.8 244.1 397.7 244.8C400.7 245.4 412.0 246.9 415.7 246.8C419.4 246.7 435.6 244.0 437.7 243.8"/>
<path d="M318.8 256.0C318.9 258.1 319.8 275.7 319.8 278.9C319.8 282.1 319.0 288.9 318.8 290.9C318.7 292.9 318.2 299.6 317.9 300.9C317.5 302.2 315.5 302.8 314.9 304.9C314.2 307.0 311.1 321.7 310.9 323.8C310.6 326.0 312.7 327.6 311.9 328.8C311.0 330.0 303.3 335.0 301.9 336.8C300.4 338.6 296.7 346.4 295.9 348.8C295.1 351.2 293.2 360.3 292.9 362.8C292.6 365.3 292.9 374.7 292.9 375.9"/>
<path d="M368.7 256.0C368.1 257.7 363.1 271.4 361.8 275.0C360.4 278.5 354.9 292.4 353.8 294.9C352.7 297.5 350.2 301.4 349.8 302.9C349.3 304.4 349.3 308.7 348.8 310.9C348.2 313.1 344.8 324.6 343.8 326.8C342.8 329.1 338.1 334.9 337.8 335.8C337.5 336.7 341.0 334.4 340.8 336.8C340.6 339.3 336.5 359.2 335.8 362.8C335.2 366.3 334.0 374.7 333.8 375.9"/>
<path d="M317.9 301.9C319.3 302.4 331.6 307.4 333.8 307.9C336.0 308.3 340.3 307.3 341.8 306.9C343.3 306.4 349.0 303.3 349.8 302.9"/>
<path d="M314.9 305.9C316.2 306.5 327.3 312.3 329.8 312.9C332.4 313.4 341.6 312.0 342.8 311.9"/>
<path d="M311.9 327.8C313.1 328.4 323.5 333.1 325.8 333.8C328.2 334.6 336.7 335.6 337.8 335.8"/>
<path d="M309.9 336.8C311.3 337.5 323.1 343.5 325.8 343.8C328.6 344.1 338.5 340.2 339.8 339.8"/>
<path d="M383.7 256.0C383.8 257.7 384.7 271.8 384.7 275.0C384.7 278.2 384.4 288.5 384.1 290.9C383.8 293.3 382.1 299.1 381.7 300.9C381.3 302.7 380.6 309.8 379.7 310.9C378.8 312.0 373.0 311.4 371.7 312.9C370.5 314.3 365.9 324.3 365.7 326.8C365.6 329.4 368.6 337.9 369.7 340.8C370.8 343.7 376.3 355.6 377.7 358.8C379.2 362.0 385.0 374.4 385.7 375.9"/>
<path d="M436.0 259.0C435.4 260.5 430.6 272.2 429.6 275.0C428.6 277.7 425.5 286.5 424.6 288.9C423.7 291.3 420.3 298.3 419.6 300.9C419.0 303.5 418.4 315.0 417.6 316.9C416.9 318.7 412.1 318.1 411.6 320.9C411.2 323.6 412.6 341.7 412.6 346.8C412.6 351.8 411.7 373.3 411.6 375.9"/>
<path d="M384.1 291.9C385.0 292.4 391.5 296.0 393.7 296.9C395.8 297.8 405.2 301.6 407.7 301.9C410.1 302.2 419.4 300.1 420.6 299.9"/>
<path d="M379.7 310.9C380.6 311.4 387.7 315.9 389.7 316.9C391.7 317.8 399.1 320.8 401.7 320.9C404.2 320.9 416.2 318.1 417.6 317.9"/>
<path d="M371.7 312.9C373.0 313.8 382.0 321.9 385.7 322.9C389.4 323.8 409.3 322.9 411.6 322.9"/>
<path d="M292.9 377.0C293.0 378.4 293.5 388.4 293.9 392.0C294.3 395.5 296.7 411.9 296.9 415.9C297.1 419.9 296.5 433.2 296.3 435.9C296.1 438.5 295.4 443.0 294.9 444.8C294.4 446.7 291.7 453.5 290.9 455.8C290.1 458.1 287.3 467.2 285.9 469.8C284.5 472.4 277.0 481.7 275.9 483.8C274.8 485.9 273.6 491.5 273.9 492.7C274.3 494.0 279.4 496.5 279.9 496.9"/>
<path d="M332.8 377.0C332.7 377.8 332.6 383.9 331.8 386.0C331.0 388.1 325.0 397.6 323.8 399.9C322.6 402.3 319.3 410.8 318.8 411.9"/>
<path d="M314.3 443.9C314.5 444.4 316.4 447.6 316.9 449.8C317.3 452.0 319.7 465.4 318.8 467.8C318.0 470.2 309.2 474.0 307.9 475.8C306.5 477.6 305.0 485.9 303.9 487.8C302.8 489.6 296.6 495.0 295.9 495.7"/>
<path d="M292.9 377.0C294.5 377.2 307.4 378.5 309.9 379.0C312.3 379.5 317.7 382.2 319.8 382.0C322.0 381.8 331.6 377.5 332.8 377.0"/>
<path d="M294.9 445.8C295.5 446.1 300.5 448.7 301.9 448.8C303.3 448.9 308.7 447.3 309.9 446.8C311.0 446.4 313.9 444.1 314.3 443.9"/>
<path d="M385.7 377.0C386.1 378.4 389.0 388.8 389.7 392.0C390.4 395.2 393.1 409.0 393.7 411.9C394.2 414.8 396.0 422.1 395.7 423.9C395.4 425.7 391.2 430.3 390.7 431.9C390.1 433.4 389.1 439.5 389.7 440.9C390.3 442.2 395.9 446.0 397.7 446.8C399.4 447.7 407.6 449.6 408.7 449.8"/>
<path d="M411.6 377.0C411.8 378.7 413.3 392.4 413.6 396.0C414.0 399.5 415.5 413.3 415.6 415.9C415.8 418.6 415.3 424.1 415.2 424.9"/>
<path d="M395.7 423.9C396.8 424.2 405.8 426.9 407.7 426.9C409.5 426.9 414.2 423.3 415.6 423.9C417.1 424.5 421.8 432.0 423.6 433.9C425.5 435.8 434.9 443.8 436.0 444.8"/>
<path d="M408.7 435.9C408.7 437.1 408.6 447.1 409.6 448.8C410.7 450.6 417.8 453.6 419.6 454.8C421.5 456.0 428.1 461.1 429.6 461.8C431.1 462.5 435.4 462.7 436.0 462.8"/>
<path d="M291.8 448.0C291.5 449.3 289.5 459.6 288.8 462.0C288.0 464.3 285.1 471.8 283.8 473.9C282.5 476.0 275.7 483.2 274.8 484.9C273.9 486.6 273.2 491.8 273.8 492.9C274.4 494.0 279.9 496.5 281.8 496.9C283.6 497.2 291.7 497.3 293.7 496.9C295.8 496.4 302.4 493.2 303.7 491.9C305.0 490.6 307.5 484.3 307.7 482.9C307.9 481.5 304.7 478.4 305.7 476.9C306.7 475.5 317.7 470.0 318.7 466.9C319.7 463.9 316.9 446.1 316.7 444.0"/>
<path d="M295.7 444.0C296.5 444.4 302.1 448.9 303.7 449.0C305.4 449.1 312.8 445.4 313.7 445.0"/>
<path d="M540.8 441.0C541.0 442.0 542.5 449.7 542.8 452.0C543.0 454.3 543.5 463.7 543.8 465.9C544.0 468.1 545.5 473.8 545.8 475.9C546.0 478.0 546.7 487.7 546.8 488.9"/>
<path d="M566.7 441.0C566.6 442.0 565.9 450.1 565.7 452.0C565.6 453.8 565.4 460.1 565.3 461.0"/>
<path d="M542.8 461.0C542.1 461.0 537.5 461.6 535.8 462.0C534.1 462.3 526.4 464.5 523.8 464.9C521.3 465.4 510.1 466.3 507.9 466.9C505.6 467.6 499.7 470.6 498.9 471.9C498.0 473.3 498.4 480.2 498.9 481.9C499.3 483.6 502.7 489.8 503.9 490.9C505.0 492.0 510.0 493.8 511.8 493.9C513.7 494.0 523.1 493.1 523.8 492.3C524.5 491.5 520.6 486.4 519.8 484.9C519.1 483.4 516.1 477.5 515.8 475.9C515.6 474.4 516.7 468.7 516.8 467.9"/>
<path d="M519.8 484.9C520.9 485.3 529.3 488.5 531.8 488.9C534.3 489.3 544.2 488.6 546.8 488.9C549.3 489.2 557.4 491.5 559.7 491.9C562.0 492.3 570.6 493.3 571.7 493.5"/>
<path d="M543.8 465.9C544.7 466.1 552.1 467.6 553.7 467.9C555.4 468.3 561.0 469.8 561.7 469.9"/>
<path d="M543.8 471.9C545.2 472.0 557.8 472.7 559.7 472.9C561.7 473.2 564.3 474.7 564.7 474.9"/>
<path d="M565.3 461.0C564.5 461.4 561.8 468.7 561.7 469.9C561.7 471.2 563.8 472.8 564.7 474.9C565.6 477.1 570.3 492.8 571.7 493.5C573.1 494.2 579.8 485.5 579.7 482.9C579.6 480.3 572.0 467.0 570.7 464.9C569.4 462.9 566.1 460.5 565.3 461.0"/>
<path d="M826.0 469.9C825.0 471.4 817.0 483.2 815.6 485.9C814.2 488.6 810.3 497.1 810.6 499.9C811.0 502.6 818.2 514.0 819.6 515.8C821.0 517.7 825.4 519.5 826.0 519.8"/>
<path d="M834.5 460.3C839.4 460.2 882.7 459.4 888.0 459.7C893.3 459.9 891.1 460.5 892.1 462.7C893.1 465.0 899.4 480.4 899.3 484.3C899.2 488.3 892.7 502.4 891.1 505.9C889.5 509.4 882.8 520.5 881.8 522.4C880.9 524.3 880.9 526.1 880.8 526.5"/>
<path d="M834.5 460.3C833.7 461.3 826.9 468.7 825.2 471.0C823.6 473.3 817.3 482.5 816.0 485.4C814.7 488.2 811.3 500.3 810.9 501.8"/>
<path d="M810.9 501.8C812.7 501.9 826.3 502.7 831.4 502.8C836.5 503.0 863.0 503.7 866.4 503.9C869.8 504.1 867.5 504.0 868.4 504.9C869.4 505.8 875.4 512.6 876.7 514.2C877.9 515.8 881.3 521.6 881.8 522.4"/>
<path d="M868.4 504.9C869.0 503.9 872.9 497.1 874.6 493.6C876.3 490.1 885.8 469.3 887.0 466.9"/>
<path d="M810.9 501.8C811.5 502.8 816.8 510.4 818.1 512.1C819.3 513.8 820.9 519.2 824.2 520.3C827.5 521.5 848.9 523.9 854.0 524.4C859.2 525.0 878.3 526.3 880.8 526.5"/>
<path d="M846.8 463.8C848.4 463.1 863.9 462.2 865.4 462.7C866.8 463.3 863.8 469.3 862.3 469.9C860.8 470.6 850.3 470.5 848.9 469.9C847.5 469.4 845.3 464.4 846.8 463.8"/>
<path d="M848.9 469.9C848.4 470.2 843.7 472.2 843.8 473.0C843.9 473.9 848.5 478.8 849.9 479.2C851.3 479.6 858.1 477.7 859.2 477.1C860.3 476.6 862.0 473.4 862.3 473.0"/>
</g>
<g stroke="#e0e0e3" stroke-width="1.3" filter="url(#softg)">
<path d="M343.9 151.0C346.0 152.3 358.5 165.0 366.8 165.9C375.1 166.9 428.4 161.4 434.7 161.0"/>
<path d="M401.7 302.9 L403.7 319.9"/>
<path d="M365.7 328.8C366.8 329.4 375.2 333.9 377.7 334.8C380.3 335.7 390.6 338.6 393.7 338.8C396.8 339.0 410.0 337.0 411.6 336.8"/>
<path d="M369.7 340.8C371.2 341.5 382.4 348.0 385.7 348.8C389.0 349.6 403.8 349.7 405.7 349.8"/>
<path d="M301.9 448.8C302.0 450.9 302.7 469.1 302.9 471.8C303.1 474.4 303.8 477.2 303.9 477.8"/>
<path d="M521.8 478.9C522.9 478.7 531.8 477.4 533.8 476.9C535.8 476.5 542.9 474.2 543.8 473.9"/>
<path d="M440.0 448.0C440.9 448.3 448.8 450.2 450.0 451.0C451.1 451.7 452.3 455.1 452.4 456.0C452.5 456.9 452.1 460.4 451.0 461.0C449.8 461.5 441.0 461.9 440.0 462.0"/>
</g>
<g stroke="#d0d0e4" stroke-width="1.4" filter="url(#softg)">
<path d="M318.8 411.9C318.6 413.2 316.3 423.0 315.9 425.9C315.4 428.8 314.4 442.2 314.3 443.9"/>
</g>
<g stroke="#d0d0d0" stroke-width="1.2" filter="url(#softg)">
<path d="M273.8 545.8C275.1 544.6 285.8 534.0 287.8 532.8C289.8 531.6 291.4 531.9 295.7 532.8C300.1 533.7 331.6 541.0 335.7 542.8C339.7 544.5 339.3 550.9 339.6 551.8"/>
<path d="M273.8 547.8 L273.8 556.7"/>
<path d="M465.9 555.7C466.6 554.5 471.1 543.1 472.9 541.8C474.8 540.5 481.6 541.5 485.9 541.8C490.2 542.1 516.0 543.5 519.8 544.8C523.7 546.1 527.1 554.7 527.8 555.7"/>
<path d="M852.0 525.5C849.4 525.2 828.2 522.3 824.2 522.4C820.3 522.5 810.0 525.0 808.8 526.5C807.6 528.0 810.3 536.2 810.9 538.8C811.4 541.5 814.6 553.8 815.0 555.3"/>
<path d="M852.0 525.5C852.4 526.7 855.3 536.1 856.1 538.8C856.9 541.6 859.8 553.8 860.2 555.3"/>
<path d="M854.0 526.5C855.7 526.3 868.8 525.2 872.6 524.4C876.3 523.7 892.4 519.0 895.2 518.3C898.0 517.5 902.1 515.1 903.4 516.2C904.7 517.3 908.8 527.8 909.6 530.6C910.3 533.4 911.4 545.6 911.6 547.1"/>
<path d="M854.0 532.7C854.8 534.0 861.0 545.0 862.3 547.1C863.6 549.1 867.9 554.5 868.4 555.3"/>
</g>
<g stroke="#cdcdda" stroke-width="1.5" filter="url(#softg)">
<path d="M530.9 171.6 L574.8 173.9"/>
<path d="M561.8 262.8 L565.8 256.8"/>
<path d="M496.8 285.9C497.0 288.1 498.2 305.9 498.8 309.9C499.5 313.9 502.4 326.4 503.8 329.8C505.2 333.3 512.0 344.9 513.8 347.8C515.6 350.7 522.9 360.5 523.8 361.8"/>
<path d="M664.9 229.5C665.7 231.0 672.1 243.2 673.8 245.8C675.6 248.4 682.4 256.1 683.8 257.8C685.3 259.5 688.7 263.0 689.8 264.8C690.9 266.6 695.2 276.6 695.8 277.8"/>
<path d="M688.8 271.0C689.4 271.6 695.7 277.0 695.7 278.0C695.8 279.0 690.4 280.3 689.8 282.0C689.1 283.6 688.8 293.4 688.8 295.9C688.7 298.5 689.1 307.5 689.4 309.9C689.6 312.3 691.0 319.3 691.8 321.9C692.5 324.4 696.6 335.1 697.7 337.9C698.8 340.6 702.4 349.1 703.7 351.8C705.0 354.6 710.4 365.6 711.7 367.8C713.0 370.0 717.1 375.0 717.7 375.8"/>
<path d="M722.8 467.9C721.1 468.0 707.0 468.8 703.9 468.9C700.7 469.0 690.8 468.4 688.9 468.9C687.0 469.5 683.8 473.5 682.9 474.9C682.0 476.4 678.5 483.5 678.9 484.9C679.4 486.3 686.3 489.0 687.9 489.9C689.4 490.8 694.9 494.0 695.9 494.3C696.9 494.6 698.8 493.9 698.9 492.9C699.0 491.8 696.8 484.6 696.9 482.9C697.0 481.3 699.2 476.1 699.9 474.9C700.5 473.7 703.5 470.4 703.9 469.9"/>
<path d="M698.9 492.9C699.9 493.1 707.7 494.6 709.8 494.9C712.0 495.2 720.4 495.5 722.8 496.3C725.2 497.0 733.2 501.8 735.8 502.9C738.4 503.9 748.8 507.9 750.8 507.9C752.7 507.8 755.9 502.9 756.7 501.9C757.6 500.9 759.5 497.3 759.7 496.9"/>
</g>
<g stroke="#dadadd" stroke-width="1.3" filter="url(#softg)">
<path d="M585.7 229.8C585.9 230.7 587.5 236.0 587.7 239.8C588.0 243.6 588.6 268.1 588.7 270.9"/>
<path d="M531.8 319.9C532.9 320.0 541.5 321.0 543.7 320.9C545.9 320.7 554.6 318.1 555.7 317.9"/>
<path d="M596.0 321.9C596.9 322.3 604.1 325.7 605.9 325.9C607.8 326.1 615.0 324.1 615.9 323.9"/>
</g>
<g stroke="#b97878" stroke-width="1.3" filter="url(#soft)">
<path d="M465.2 337.6 L444.3 336.7"/>
<path d="M444.3 336.7C443.8 338.1 439.2 349.4 438.0 352.6C436.8 355.8 432.3 369.8 431.7 371.6"/>
<path d="M431.7 379.7C432.1 381.2 435.1 393.0 436.2 396.0C437.3 399.0 442.8 410.8 443.4 412.3"/>
<path d="M446.7 419.2 L463.3 417.4"/>
<path d="M469.3 367.2 L469.7 367.6"/>
</g>
<g stroke="#cfa5a5" stroke-width="1.1" filter="url(#soft)">
<path d="M431.7 371.6 L457.9 372.5"/>
<path d="M468.4 342.6 L468.8 349.9"/>
<path d="M465.5 405.1 L465.5 410.5"/>
</g>
</g>
<g id="panels" filter="url(#soft3)">
<rect x="826" y="62.8" width="92.6" height="61.4" fill="#3b3b3b" />
<rect x="826" y="62.8" width="92.6" height="5.2" fill="#2f2f2f" />
<rect x="826" y="68.0" width="92.6" height="8" fill="#2a2a2a" />
<rect x="829" y="68.2" width="11.5" height="7.6" fill="#474747" />
<text x="830" y="74.4" font-size="5" fill="#c9c9c9" opacity=".8" text-anchor="start" >颜色</text>
<text x="906" y="67.2" font-size="5" fill="#9a9a9a" opacity=".8" text-anchor="start" >«</text>
<text x="912.5" y="67.4" font-size="5.5" fill="#9a9a9a" opacity=".8" text-anchor="start" >×</text>
<path d="M910.5 72.2h4.5M910.5 73.6h4.5M910.5 75h4.5" stroke="#aaa" stroke-width=".6"/><path d="M907.8 72.6l1.4 1.4 1.4-1.4z" fill="#aaa" transform="translate(-1.2 0)"/>
<rect x="829.2" y="80.4" width="8" height="8" fill="#8e1a10" stroke="#b5b5b5" stroke-width=".5"/>
<rect x="833.6" y="85.4" width="7.6" height="7.6" fill="#f5f5f5" />
<rect x="829.6" y="80.8" width="7.2" height="7.2" fill="#8e1a10" />
<text x="845" y="86.3" font-size="5.5" fill="#b5b5b5" opacity=".8" text-anchor="start" >H</text>
<rect x="851.4" y="81.6" width="35.8" height="2.9" fill="url(#hue)" />
<path d="M851 87.6l1.4-2 1.4 2z" fill="#bdbdbd"/>
<rect x="889" y="80" width="22" height="9" fill="#2f2f2f" />
<text x="890.5" y="87" font-size="5.5" fill="#c9c9c9" opacity=".8" text-anchor="start" >0</text>
<text x="913" y="85" font-size="5.5" fill="#a0a0a0" opacity=".8" text-anchor="start" >°</text>
<text x="845" y="97.5" font-size="5.5" fill="#b5b5b5" opacity=".8" text-anchor="start" >S</text>
<rect x="851.4" y="92.2" width="35.8" height="2.9" fill="url(#sat)" />
<path d="M885 98.8l1.4-2 1.4 2z" fill="#bdbdbd"/>
<rect x="889" y="91" width="22" height="9" fill="#2f2f2f" />
<text x="890.5" y="98" font-size="5.5" fill="#c9c9c9" opacity=".8" text-anchor="start" >100</text>
<text x="912" y="97.5" font-size="5.5" fill="#a0a0a0" opacity=".8" text-anchor="start" >%</text>
<text x="845" y="108.5" font-size="5.5" fill="#b5b5b5" opacity=".8" text-anchor="start" >B</text>
<rect x="851.4" y="103.3" width="35.8" height="2.6" fill="url(#bri)" />
<path d="M868 109.6l1.4-2 1.4 2z" fill="#bdbdbd"/>
<rect x="889" y="102" width="22" height="9" fill="#2f2f2f" />
<text x="890.5" y="109" font-size="5.5" fill="#c9c9c9" opacity=".8" text-anchor="start" >51</text>
<text x="912" y="108.5" font-size="5.5" fill="#a0a0a0" opacity=".8" text-anchor="start" >%</text>
<path d="M831.5 109.4l2.2-5 2.2 5z" fill="none" stroke="#c4c4c4" stroke-width=".9"/>
<rect x="838.3" y="104.3" width="5" height="5" fill="#a8261c" stroke="#d8d8d8" stroke-width=".6"/>
<rect x="829.4" y="115.9" width="85.4" height="5.7" fill="url(#spec)" />
<rect x="829.4" y="115.9" width="85.4" height="5.7" fill="url(#specv)" />
<rect x="912.3" y="115.9" width="2.5" height="2.8" fill="#fff" />
<rect x="912.3" y="118.7" width="2.5" height="2.9" fill="#000" />
<rect x="727.2" y="124.1" width="92" height="155.3" fill="#3b3b3b" />
<rect x="727.2" y="124.1" width="92" height="6" fill="#2f2f2f" />
<rect x="727.2" y="130.1" width="92" height="7" fill="#2a2a2a" />
<rect x="729.2" y="130.3" width="13.5" height="6.8" fill="#474747" />
<text x="730.6" y="135.9" font-size="5" fill="#c9c9c9" opacity=".8" text-anchor="start" >色板</text>
<text x="806.5" y="129" font-size="5" fill="#9a9a9a" opacity=".8" text-anchor="start" >«</text>
<text x="813" y="129.2" font-size="5.5" fill="#9a9a9a" opacity=".8" text-anchor="start" >×</text>
<path d="M812 133h4.5M812 134.4h4.5M812 135.8h4.5" stroke="#aaa" stroke-width=".6"/><path d="M808.6 133.4l1.4 1.4 1.4-1.4z" fill="#aaa"/>
<rect x="728.6" y="138.2" width="14.1" height="14" fill="#2424f8" />
<rect x="743" y="152.3" width="69" height="0.6" fill="#333" />
<text x="745.2" y="147.5" font-size="5.5" fill="#c4c4c4" opacity=".8" text-anchor="start" >rdddd</text>
<rect x="728.6" y="152.88" width="14.1" height="14" fill="#0b0b0b" />
<rect x="743" y="166.98" width="69" height="0.6" fill="#333" />
<text x="745.2" y="162.18" font-size="5.5" fill="#c4c4c4" opacity=".8" text-anchor="start" >h</text>
<rect x="728.6" y="167.56" width="14.1" height="14" fill="#24248c" />
<rect x="743" y="181.66" width="69" height="0.6" fill="#333" />
<text x="745.2" y="176.86" font-size="5.5" fill="#c4c4c4" opacity=".8" text-anchor="start" >色板 22</text>
<rect x="728.6" y="182.24" width="14.1" height="14" fill="#96170c" />
<rect x="743" y="196.34" width="69" height="0.6" fill="#333" />
<text x="745.2" y="191.54" font-size="5.5" fill="#c4c4c4" opacity=".8" text-anchor="start" >色板 23</text>
<rect x="728.6" y="196.92" width="14.1" height="14" fill="#d98a7e" />
<rect x="743" y="211.02" width="69" height="0.6" fill="#333" />
<text x="745.2" y="206.22" font-size="5.5" fill="#c4c4c4" opacity=".8" text-anchor="start" >色板 16</text>
<rect x="728.6" y="211.6" width="14.1" height="14" fill="#0fa888" />
<rect x="743" y="225.7" width="69" height="0.6" fill="#333" />
<text x="745.2" y="220.9" font-size="5.5" fill="#c4c4c4" opacity=".8" text-anchor="start" >色板 26</text>
<rect x="728.6" y="226.28" width="14.1" height="14" fill="#fe2010" />
<rect x="743" y="240.38" width="69" height="0.6" fill="#333" />
<text x="745.2" y="235.58" font-size="5.5" fill="#c4c4c4" opacity=".8" text-anchor="start" >rddddd</text>
<rect x="728.6" y="240.96" width="14.1" height="14" fill="#e655f0" />
<rect x="743" y="255.06" width="69" height="0.6" fill="#333" />
<text x="745.2" y="250.26" font-size="5.5" fill="#c4c4c4" opacity=".8" text-anchor="start" >色板 28</text>
<rect x="728.6" y="255.64" width="14.1" height="14" fill="#4a0e0e" />
<rect x="743" y="269.74" width="69" height="0.6" fill="#333" />
<text x="745.2" y="264.94" font-size="5.5" fill="#c4c4c4" opacity=".8" text-anchor="start" >色板 29</text>
<rect x="812.5" y="138" width="6.2" height="131.5" fill="#343434" />
<rect x="812.9" y="144.8" width="5.4" height="72" fill="#5a5a5a" />
<path d="M814.2 142.6l1.4-1.8 1.4 1.8z" fill="#aaa"/><path d="M814.2 264.6l1.4 1.8 1.4-1.8z" fill="#aaa"/>
<rect x="789.5" y="272" width="4.5" height="5" fill="#9a9a9a" />
<rect x="788.8" y="271.2" width="5.9" height="1.1" fill="#b5b5b5" />
<rect x="802.5" y="271.6" width="4" height="5.2" fill="#555" />
<rect x="765" y="278.2" width="16" height="0.8" fill="#2a2a2a" />
<rect x="819.4" y="141" width="103.8" height="298.2" fill="#3b3b3b" />
<rect x="819.4" y="141" width="103.8" height="5" fill="#2f2f2f" />
<rect x="819.4" y="146" width="103.8" height="7.8" fill="#2a2a2a" />
<rect x="821.8" y="146.2" width="12.2" height="7.4" fill="#474747" />
<text x="822.8" y="152" font-size="5" fill="#cdcdcd" opacity=".8" text-anchor="start" >图层</text>
<text x="840" y="152" font-size="5" fill="#858585" opacity=".8" text-anchor="start" >通道</text>
<text x="911" y="145.4" font-size="5" fill="#9a9a9a" opacity=".8" text-anchor="start" >«</text>
<text x="917.5" y="145.6" font-size="5.5" fill="#9a9a9a" opacity=".8" text-anchor="start" >×</text>
<path d="M916.2 149.4h4.5M916.2 150.8h4.5M916.2 152.2h4.5" stroke="#aaa" stroke-width=".6"/>
<rect x="822" y="155.6" width="20" height="8.6" fill="#474747" />
<text x="823" y="162.2" font-size="5" fill="#c4c4c4" opacity=".8" text-anchor="start" >ρ 类型</text>
<path d="M847.5 158.4l1.3 1.6 1.3-1.6z" fill="#999"/>
<rect x="860.5" y="156.8" width="6" height="5.6" fill="none" stroke="#a8a8a8" stroke-width=".8"/>
<circle cx="874" cy="159.6" r="2.6" fill="#a0a0a0"/><path d="M874 157v5.2a2.6 2.6 0 0 0 0-5.2z" fill="#3b3b3b"/>
<text x="881.5" y="162.4" font-size="6.5" fill="#b5b5b5" opacity=".8" text-anchor="start" >T</text>
<rect x="892" y="156.8" width="5.6" height="5.6" fill="none" stroke="#a8a8a8" stroke-width=".8" stroke-dasharray="1.6 1.2"/>
<rect x="903.5" y="157" width="4.6" height="5.8" fill="#9c9c9c" />
<rect x="917.5" y="157.2" width="1.6" height="5" fill="#8a8a8a" />
<rect x="822" y="167.2" width="46.5" height="9.4" fill="#4a4a4a" />
<text x="824.4" y="174.4" font-size="5.3" fill="#d0d0d0" opacity=".8" text-anchor="start" >正常</text>
<path d="M864.5 170.4l1.2 1.5 1.2-1.5zM864.5 173.2l1.2-1.5 1.2 1.5z" fill="#aaa" transform="translate(0 .6)"/>
<text x="872" y="174.4" font-size="5" fill="#c4c4c4" opacity=".8" text-anchor="start" >不透明度:</text>
<rect x="897.2" y="167.2" width="15" height="9.4" fill="#2c2c2c" />
<text x="898.6" y="174.4" font-size="5" fill="#d0d0d0" opacity=".8" text-anchor="start" >100%</text>
<rect x="913.4" y="167.6" width="7.4" height="8.6" fill="#474747" />
<path d="M915.9 171l1.3 1.6 1.3-1.6z" fill="#aaa"/>
<text x="822.6" y="186.2" font-size="5" fill="#c4c4c4" opacity=".8" text-anchor="start" >锁定:</text>
<rect x="838.6" y="181.2" width="4.6" height="4.6" fill="none" stroke="#aaa" stroke-width=".8" stroke-dasharray="1 .8"/>
<path d="M848 186.4l5.4-5.4" stroke="#c4c4c4" stroke-width="1.1" stroke-linecap="round"/>
<path d="M860 180.6v6M857 183.6h6" stroke="#aaa" stroke-width=".9"/>
<rect x="867.6" y="183" width="4.4" height="3.6" fill="#aaa" />
<path d="M868.6 183v-1.2a1.2 1.2 0 0 1 2.4 0v1.2" fill="none" stroke="#aaa" stroke-width=".7"/>
<text x="883" y="186.2" font-size="5" fill="#c4c4c4" opacity=".8" text-anchor="start" >填充:</text>
<rect x="897.2" y="179.4" width="15" height="9.4" fill="#2c2c2c" />
<text x="898.6" y="186.4" font-size="5" fill="#d0d0d0" opacity=".8" text-anchor="start" >100%</text>
<rect x="913.4" y="179.8" width="7.4" height="8.6" fill="#474747" />
<path d="M915.9 183.2l1.3 1.6 1.3-1.6z" fill="#aaa"/>
<rect x="819.4" y="190.6" width="97.3" height="0.7" fill="#2c2c2c" />
<rect x="833.2" y="191.4" width="83.5" height="15.3" fill="#4f5876" />
<rect x="833.4" y="191.5" width="11.6" height="15.1" fill="#2a2a2a" stroke="#9a9a9a" stroke-width=".7"/>
<ellipse cx="826" cy="199.2" rx="2.6" ry="1.6" fill="none" stroke="#8a8a8a" stroke-width=".8"/><circle cx="826" cy="199.2" r=".8" fill="#8a8a8a"/>
<rect x="832.6" y="191.1" width="0.6" height="16.9" fill="#2f2f2f" />
<rect x="834.8" y="192.6" width="9.1" height="12.9" fill="#fbfbfb" />
<rect x="834.8" y="192.6" width="9.1" height="12.9" fill="url(#chk)" />
<text x="848.2" y="201.2" font-size="5.2" fill="#d2d2d2" opacity=".8" text-anchor="start" >图层 4</text>
<rect x="832.6" y="208.0" width="0.6" height="16.9" fill="#2f2f2f" />
<rect x="819.4" y="207.9" width="97.3" height="0.6" fill="#303030" />
<rect x="834.8" y="209.5" width="9.1" height="12.9" fill="#fbfbfb" />
<rect x="834.8" y="209.5" width="9.1" height="12.9" fill="url(#chk)" />
<rect x="838.8" y="217.1" width="5.4" height="5.6" fill="#3b3b3b" />
<rect x="840.2" y="218.7" width="2.8" height="2.8" fill="#d0d0d0" />
<rect x="841" y="219.5" width="1.2" height="1.2" fill="#3b3b3b" />
<text x="848.4" y="217.5" font-size="4.6" fill="#c4c4c4" opacity=".8" text-anchor="start" >779a7118d61a998bbebcbd...</text>
<ellipse cx="826" cy="233.0" rx="2.6" ry="1.6" fill="none" stroke="#8a8a8a" stroke-width=".8"/><circle cx="826" cy="233.0" r=".8" fill="#8a8a8a"/>
<rect x="832.6" y="224.9" width="0.6" height="16.9" fill="#2f2f2f" />
<rect x="819.4" y="224.8" width="97.3" height="0.6" fill="#303030" />
<rect x="834.8" y="226.4" width="9.1" height="12.9" fill="#fbfbfb" />
<rect x="834.8" y="226.4" width="9.1" height="12.9" fill="url(#chk)" />
<text x="848.2" y="235.0" font-size="5.2" fill="#d2d2d2" opacity=".8" text-anchor="start" >图层 3</text>
<ellipse cx="826" cy="249.9" rx="2.6" ry="1.6" fill="none" stroke="#8a8a8a" stroke-width=".8"/><circle cx="826" cy="249.9" r=".8" fill="#8a8a8a"/>
<rect x="832.6" y="241.8" width="0.6" height="16.9" fill="#2f2f2f" />
<rect x="819.4" y="241.7" width="97.3" height="0.6" fill="#303030" />
<rect x="834.8" y="243.3" width="9.1" height="12.9" fill="#fbfbfb" />
<rect x="834.8" y="243.3" width="9.1" height="12.9" fill="url(#chk)" />
<text x="848.2" y="251.9" font-size="5.2" fill="#d2d2d2" opacity=".8" text-anchor="start" >图层 2</text>
<ellipse cx="826" cy="266.8" rx="2.6" ry="1.6" fill="none" stroke="#8a8a8a" stroke-width=".8"/><circle cx="826" cy="266.8" r=".8" fill="#8a8a8a"/>
<rect x="832.6" y="258.7" width="0.6" height="16.9" fill="#2f2f2f" />
<rect x="819.4" y="258.6" width="97.3" height="0.6" fill="#303030" />
<rect x="834.8" y="260.2" width="9.1" height="12.9" fill="#fbfbfb" />
<text x="849.6" y="268.8" font-size="5.2" fill="#cfcfcf" opacity=".8" text-anchor="start" font-style="italic">背景</text>
<rect x="905.6" y="265.6" width="4.6" height="3.8" fill="#9a9a9a" />
<path d="M906.6 265.6v-1.3a1.3 1.3 0 0 1 2.6 0v1.3" fill="none" stroke="#9a9a9a" stroke-width=".7"/>
<rect x="819.4" y="275.6" width="97.3" height="0.6" fill="#303030" />
<rect x="916.7" y="190.6" width="0.6" height="96" fill="#303030" />
<text x="836" y="295.4" font-size="5.5" fill="#6a6a6a" opacity=".8" text-anchor="start" >⊖</text>
<text x="848.2" y="296" font-size="5.5" fill="#b5b5b5" opacity=".8" text-anchor="start" font-style="italic">fx</text>
<rect x="859.2" y="290.4" width="6" height="5" fill="#c4c4c4" />
<circle cx="862.2" cy="292.9" r="1.4" fill="#3b3b3b"/>
<circle cx="873.6" cy="293" r="2.7" fill="#bdbdbd"/><path d="M873.6 290.3v5.4a2.7 2.7 0 0 0 0-5.4z" fill="#3b3b3b"/>
<path d="M881.8 290.4h2.6l.8 1h3.2v4.4h-6.6z" fill="#c4c4c4"/>
<rect x="894.2" y="290.6" width="4.6" height="5.2" fill="#c4c4c4" />
<rect x="896.4" y="292.8" width="3" height="3.4" fill="#e0e0e0" />
<rect x="906" y="291.4" width="4.4" height="4.6" fill="#9c9c9c" />
<rect x="905.4" y="290.4" width="5.6" height="0.9" fill="#aaa" />
<rect x="819.4" y="298.8" width="103.8" height="7.6" fill="#2a2a2a" />
<rect x="821.8" y="299.2" width="21.6" height="7" fill="#474747" />
<text x="822.8" y="304.9" font-size="5" fill="#cdcdcd" opacity=".8" text-anchor="start" >历史记录</text>
<text x="850.4" y="304.9" font-size="5" fill="#7c7c7c" opacity=".8" text-anchor="start" >动作</text>
<path d="M915.6 301.6h4.5M915.6 303h4.5M915.6 304.4h4.5" stroke="#aaa" stroke-width=".6"/>
<rect x="819.4" y="318.4" width="97.3" height="0.55" fill="#323232" />
<path d="M833.3000000000001 316.20000000000005L839.9000000000001 310.40000000000003" stroke="#d8d8d8" stroke-width="1.1" stroke-linecap="round" fill="none"/><circle cx="833.8000000000001" cy="315.90000000000003" r="1.1" fill="#d8d8d8"/>
<text x="845" y="315.5" font-size="5.1" fill="#d6d6d6" opacity=".8" text-anchor="start" >画笔工具</text>
<rect x="819.4" y="328.33" width="97.3" height="0.55" fill="#323232" />
<path d="M833.3000000000001 326.13L839.9000000000001 320.33" stroke="#d8d8d8" stroke-width="1.1" stroke-linecap="round" fill="none"/><circle cx="833.8000000000001" cy="325.83" r="1.1" fill="#d8d8d8"/>
<text x="845" y="325.43" font-size="5.1" fill="#d6d6d6" opacity=".8" text-anchor="start" >画笔工具</text>
<rect x="819.4" y="338.26" width="97.3" height="0.55" fill="#323232" />
<path d="M833.3000000000001 336.06L839.9000000000001 330.26" stroke="#d8d8d8" stroke-width="1.1" stroke-linecap="round" fill="none"/><circle cx="833.8000000000001" cy="335.76" r="1.1" fill="#d8d8d8"/>
<text x="845" y="335.36" font-size="5.1" fill="#d6d6d6" opacity=".8" text-anchor="start" >画笔工具</text>
<rect x="819.4" y="348.19" width="97.3" height="0.55" fill="#323232" />
<path d="M833.3000000000001 345.99L839.9000000000001 340.19" stroke="#d8d8d8" stroke-width="1.1" stroke-linecap="round" fill="none"/><circle cx="833.8000000000001" cy="345.69" r="1.1" fill="#d8d8d8"/>
<text x="845" y="345.29" font-size="5.1" fill="#d6d6d6" opacity=".8" text-anchor="start" >画笔工具</text>
<rect x="819.4" y="358.12" width="97.3" height="0.55" fill="#323232" />
<path d="M833.3000000000001 355.92L839.9000000000001 350.12" stroke="#d8d8d8" stroke-width="1.1" stroke-linecap="round" fill="none"/><circle cx="833.8000000000001" cy="355.62" r="1.1" fill="#d8d8d8"/>
<text x="845" y="355.22" font-size="5.1" fill="#d6d6d6" opacity=".8" text-anchor="start" >画笔工具</text>
<rect x="819.4" y="368.05" width="97.3" height="0.55" fill="#323232" />
<path d="M833.3000000000001 365.85L839.9000000000001 360.05" stroke="#d8d8d8" stroke-width="1.1" stroke-linecap="round" fill="none"/><circle cx="833.8000000000001" cy="365.55" r="1.1" fill="#d8d8d8"/>
<text x="845" y="365.15" font-size="5.1" fill="#d6d6d6" opacity=".8" text-anchor="start" >画笔工具</text>
<rect x="819.4" y="377.98" width="97.3" height="0.55" fill="#323232" />
<path d="M833.3000000000001 375.78000000000003L839.9000000000001 369.98" stroke="#d8d8d8" stroke-width="1.1" stroke-linecap="round" fill="none"/><circle cx="833.8000000000001" cy="375.48" r="1.1" fill="#d8d8d8"/>
<text x="845" y="375.08" font-size="5.1" fill="#d6d6d6" opacity=".8" text-anchor="start" >画笔工具</text>
<rect x="819.4" y="387.91" width="97.3" height="0.55" fill="#323232" />
<path d="M833.3000000000001 385.71000000000004L839.9000000000001 379.91" stroke="#d8d8d8" stroke-width="1.1" stroke-linecap="round" fill="none"/><circle cx="833.8000000000001" cy="385.41" r="1.1" fill="#d8d8d8"/>
<text x="845" y="385.01" font-size="5.1" fill="#d6d6d6" opacity=".8" text-anchor="start" >画笔工具</text>
<rect x="819.4" y="397.84" width="97.3" height="0.55" fill="#323232" />
<path d="M833.3000000000001 395.64000000000004L839.9000000000001 389.84000000000003" stroke="#d8d8d8" stroke-width="1.1" stroke-linecap="round" fill="none"/><circle cx="833.8000000000001" cy="395.34000000000003" r="1.1" fill="#d8d8d8"/>
<text x="845" y="394.94" font-size="5.1" fill="#d6d6d6" opacity=".8" text-anchor="start" >画笔工具</text>
<rect x="819.4" y="407.77" width="97.3" height="0.55" fill="#323232" />
<path d="M833.3000000000001 405.57000000000005L839.9000000000001 399.77000000000004" stroke="#d8d8d8" stroke-width="1.1" stroke-linecap="round" fill="none"/><circle cx="833.8000000000001" cy="405.27000000000004" r="1.1" fill="#d8d8d8"/>
<text x="845" y="404.87" font-size="5.1" fill="#d6d6d6" opacity=".8" text-anchor="start" >画笔工具</text>
<rect x="819.4" y="417.7" width="97.3" height="0.55" fill="#323232" />
<path d="M833.3000000000001 415.5L839.9000000000001 409.7" stroke="#d8d8d8" stroke-width="1.1" stroke-linecap="round" fill="none"/><circle cx="833.8000000000001" cy="415.2" r="1.1" fill="#d8d8d8"/>
<text x="845" y="414.8" font-size="5.1" fill="#d6d6d6" opacity=".8" text-anchor="start" >画笔工具</text>
<rect x="819.4" y="418.23" width="97.3" height="9.5" fill="#4f5876" />
<path d="M833.6 424.2l3.2-3.4 2.8 2-3.2 3.4z" fill="#e0e0e0"/><path d="M833.2 425.4h5" stroke="#d0d0d0" stroke-width=".7"/>
<text x="845" y="424.73" font-size="5.1" fill="#e0e0e0" opacity=".8" text-anchor="start" >橡皮擦</text>
<rect x="916.7" y="306.4" width="6.1" height="122" fill="#343434" />
<rect x="917.1" y="366" width="5.3" height="52.2" fill="#5c5c5c" />
<rect x="917" y="418.6" width="5.6" height="9.4" fill="#222" />
<path d="M918.4 422.6l1.4 1.8 1.4-1.8z" fill="#ddd"/>
<path d="M879.6 435.4l2.6-3.6 2.6 3.6z" fill="#b0b0b0"/>
<rect x="880.9" y="434.2" width="2.6" height="1.6" fill="#b0b0b0" />
<rect x="892.6" y="431.4" width="6.4" height="4.6" fill="#b0b0b0" />
<circle cx="895.8" cy="433.8" r="1.3" fill="#3b3b3b"/>
<rect x="906" y="431.6" width="4.2" height="4.6" fill="#777" />
<rect x="905.4" y="430.8" width="5.4" height="0.8" fill="#888" />
<rect x="870" y="438.3" width="14" height="0.8" fill="#262626" />
<rect x="723" y="280" width="91.1" height="215.5" fill="#3b3b3b" />
<rect x="723" y="280" width="91.1" height="6" fill="#262626" />
<rect x="723" y="286" width="91.1" height="7.4" fill="#2a2a2a" />
<rect x="725.6" y="286.4" width="21.6" height="7" fill="#474747" />
<text x="726.6" y="292" font-size="5" fill="#cdcdcd" opacity=".8" text-anchor="start" >工具预设</text>
<text x="801.4" y="285" font-size="5" fill="#9a9a9a" opacity=".8" text-anchor="start" >«</text>
<text x="808" y="285.2" font-size="5.5" fill="#9a9a9a" opacity=".8" text-anchor="start" >×</text>
<path d="M806.6 289h4.5M806.6 290.4h4.5M806.6 291.8h4.5" stroke="#aaa" stroke-width=".6"/>
<rect x="723" y="304.3" width="84.5" height="0.55" fill="#323232" />
<path d="M726.2 301.90000000000003L732.8000000000001 296.1" stroke="#d8d8d8" stroke-width="1.1" stroke-linecap="round" fill="none"/><circle cx="726.7" cy="301.6" r="1.1" fill="#d8d8d8"/>
<text x="780" y="301.2" font-size="5.1" fill="#d0d0d0" opacity=".8" text-anchor="start" style="white-space:pre">铅丝</text>
<rect x="723" y="314.6" width="84.5" height="0.55" fill="#323232" />
<path d="M726.2 312.20000000000005L732.8000000000001 306.40000000000003" stroke="#d8d8d8" stroke-width="1.1" stroke-linecap="round" fill="none"/><circle cx="726.7" cy="311.90000000000003" r="1.1" fill="#d8d8d8"/>
<text x="780" y="311.5" font-size="5.1" fill="#d0d0d0" opacity=".8" text-anchor="start" style="white-space:pre">铅笔</text>
<rect x="723" y="324.9" width="84.5" height="0.55" fill="#323232" />
<path d="M726.2 322.5L732.8000000000001 316.7" stroke="#d8d8d8" stroke-width="1.1" stroke-linecap="round" fill="none"/><circle cx="726.7" cy="322.2" r="1.1" fill="#d8d8d8"/>
<text x="779" y="321.8" font-size="5.1" fill="#d0d0d0" opacity=".8" text-anchor="start" style="white-space:pre">更圆粉蜡</text>
<rect x="723" y="335.2" width="84.5" height="0.55" fill="#323232" />
<path d="M726.2 332.8L732.8000000000001 327.0" stroke="#d8d8d8" stroke-width="1.1" stroke-linecap="round" fill="none"/><circle cx="726.7" cy="332.5" r="1.1" fill="#d8d8d8"/>
<text x="777" y="332.1" font-size="5.1" fill="#d0d0d0" opacity=".8" text-anchor="start" style="white-space:pre">火影</text>
<rect x="723" y="345.5" width="84.5" height="0.55" fill="#323232" />
<path d="M726.2 343.1L732.8000000000001 337.3" stroke="#d8d8d8" stroke-width="1.1" stroke-linecap="round" fill="none"/><circle cx="726.7" cy="342.8" r="1.1" fill="#d8d8d8"/>
<text x="773" y="342.4" font-size="5.1" fill="#d0d0d0" opacity=".8" text-anchor="start" style="white-space:pre">虎膝</text>
<rect x="723" y="355.8" width="84.5" height="0.55" fill="#323232" />
<path d="M726.2 353.40000000000003L732.8000000000001 347.6" stroke="#d8d8d8" stroke-width="1.1" stroke-linecap="round" fill="none"/><circle cx="726.7" cy="353.1" r="1.1" fill="#d8d8d8"/>
<text x="772" y="352.7" font-size="5.1" fill="#d0d0d0" opacity=".8" text-anchor="start" style="white-space:pre">兔子</text>
<rect x="723" y="366.1" width="84.5" height="0.55" fill="#323232" />
<path d="M726.2 363.70000000000005L732.8000000000001 357.90000000000003" stroke="#d8d8d8" stroke-width="1.1" stroke-linecap="round" fill="none"/><circle cx="726.7" cy="363.40000000000003" r="1.1" fill="#d8d8d8"/>
<text x="771.5" y="363.0" font-size="5.1" fill="#d0d0d0" opacity=".8" text-anchor="start" style="white-space:pre">1   3</text>
<rect x="723" y="376.4" width="84.5" height="0.55" fill="#323232" />
<path d="M726.2 374.0L732.8000000000001 368.2" stroke="#d8d8d8" stroke-width="1.1" stroke-linecap="round" fill="none"/><circle cx="726.7" cy="373.7" r="1.1" fill="#d8d8d8"/>
<text x="770.5" y="373.3" font-size="5.1" fill="#d0d0d0" opacity=".8" text-anchor="start" style="white-space:pre" textLength="24.5" lengthAdjust="spacingAndGlyphs">==========</text>
<rect x="723" y="386.7" width="84.5" height="0.55" fill="#323232" />
<path d="M726.2 384.3L732.8000000000001 378.5" stroke="#d8d8d8" stroke-width="1.1" stroke-linecap="round" fill="none"/><circle cx="726.7" cy="384.0" r="1.1" fill="#d8d8d8"/>
<text x="771" y="383.6" font-size="5.1" fill="#d0d0d0" opacity=".8" text-anchor="start" style="white-space:pre" textLength="23"  lengthAdjust="spacingAndGlyphs">ı+ı+ı+ı+ı+</text>
<rect x="723" y="397.0" width="84.5" height="0.55" fill="#323232" />
<path d="M726.2 394.6L732.8000000000001 388.8" stroke="#d8d8d8" stroke-width="1.1" stroke-linecap="round" fill="none"/><circle cx="726.7" cy="394.3" r="1.1" fill="#d8d8d8"/>
<text x="770" y="393.9" font-size="5.1" fill="#d0d0d0" opacity=".8" text-anchor="start" style="white-space:pre" textLength="18" lengthAdjust="spacingAndGlyphs">1111111</text>
<rect x="723" y="407.3" width="84.5" height="0.55" fill="#323232" />
<path d="M726.2 404.90000000000003L732.8000000000001 399.1" stroke="#d8d8d8" stroke-width="1.1" stroke-linecap="round" fill="none"/><circle cx="726.7" cy="404.6" r="1.1" fill="#d8d8d8"/>
<text x="770" y="404.2" font-size="5.1" fill="#d0d0d0" opacity=".8" text-anchor="start" style="white-space:pre" textLength="25" lengthAdjust="spacingAndGlyphs">1111111111</text>
<rect x="723" y="417.6" width="84.5" height="0.55" fill="#323232" />
<path d="M726.2 415.20000000000005L732.8000000000001 409.40000000000003" stroke="#d8d8d8" stroke-width="1.1" stroke-linecap="round" fill="none"/><circle cx="726.7" cy="414.90000000000003" r="1.1" fill="#d8d8d8"/>
<text x="770" y="414.5" font-size="5.1" fill="#d0d0d0" opacity=".8" text-anchor="start" style="white-space:pre" textLength="36" lengthAdjust="spacingAndGlyphs">11111111111111</text>
<rect x="723" y="427.9" width="84.5" height="0.55" fill="#323232" />
<path d="M726.2 425.5L732.8000000000001 419.7" stroke="#d8d8d8" stroke-width="1.1" stroke-linecap="round" fill="none"/><circle cx="726.7" cy="425.2" r="1.1" fill="#d8d8d8"/>
<text x="769.6" y="424.8" font-size="5.1" fill="#d0d0d0" opacity=".8" text-anchor="start" style="white-space:pre">淡 淡 淡 淡</text>
<rect x="723" y="438.2" width="84.5" height="0.55" fill="#323232" />
<path d="M726.2 435.8L732.8000000000001 430.0" stroke="#d8d8d8" stroke-width="1.1" stroke-linecap="round" fill="none"/><circle cx="726.7" cy="435.5" r="1.1" fill="#d8d8d8"/>
<text x="767" y="435.1" font-size="5.1" fill="#d0d0d0" opacity=".8" text-anchor="start" style="white-space:pre" textLength="40" lengthAdjust="spacingAndGlyphs">6 896 尖角 888888</text>
<rect x="723" y="448.5" width="84.5" height="0.55" fill="#323232" />
<path d="M726.2 446.1L732.8000000000001 440.3" stroke="#d8d8d8" stroke-width="1.1" stroke-linecap="round" fill="none"/><circle cx="726.7" cy="445.8" r="1.1" fill="#d8d8d8"/>
<text x="768" y="445.4" font-size="5.1" fill="#d0d0d0" opacity=".8" text-anchor="start" style="white-space:pre" textLength="18" lengthAdjust="spacingAndGlyphs">0000000</text>
<rect x="723" y="458.8" width="84.5" height="0.55" fill="#323232" />
<path d="M726.2 456.40000000000003L732.8000000000001 450.6" stroke="#d8d8d8" stroke-width="1.1" stroke-linecap="round" fill="none"/><circle cx="726.7" cy="456.1" r="1.1" fill="#d8d8d8"/>
<text x="768" y="455.7" font-size="5.1" fill="#d0d0d0" opacity=".8" text-anchor="start" style="white-space:pre" textLength="29" lengthAdjust="spacingAndGlyphs">000000000000</text>
<rect x="723" y="469.1" width="84.5" height="0.55" fill="#323232" />
<path d="M726.2 466.70000000000005L732.8000000000001 460.90000000000003" stroke="#d8d8d8" stroke-width="1.1" stroke-linecap="round" fill="none"/><circle cx="726.7" cy="466.40000000000003" r="1.1" fill="#d8d8d8"/>
<text x="768" y="466.0" font-size="5.1" fill="#d0d0d0" opacity=".8" text-anchor="start" style="white-space:pre" textLength="31" lengthAdjust="spacingAndGlyphs">圆干 6 6 6 6 6</text>
<rect x="723" y="479.4" width="84.5" height="0.55" fill="#323232" />
<path d="M726.2 477.0L732.8000000000001 471.2" stroke="#d8d8d8" stroke-width="1.1" stroke-linecap="round" fill="none"/><circle cx="726.7" cy="476.7" r="1.1" fill="#d8d8d8"/>
<rect x="807.6" y="294" width="6.2" height="190" fill="#333" />
<rect x="808" y="301.5" width="5.4" height="42" fill="#5a5a5a" />
<path d="M809.4 298.6l1.4-1.8 1.4 1.8z" fill="#aaa"/>
<path d="M729 487.2l1.6 1.8 2.8-3.8" fill="none" stroke="#e0e0e0" stroke-width="1"/>
<text x="733.6" y="489.8" font-size="4.8" fill="#c9c9c9" opacity=".8" text-anchor="start" >仅限当前工具</text>
<clipPath id="tp"><rect x="723" y="280" width="91.1" height="215.5"/></clipPath>
<g clip-path="url(#tp)"><g fill="#a6a6a6"><circle cx="777.4" cy="472.4" r="5.3"/><circle cx="771.2" cy="476.2" r="5.1"/><circle cx="783.4" cy="476.2" r="5.1"/><rect x="771" y="474" width="12.600" height="7.300" rx="1"/></g><rect x="767.4" y="472.800" width="19.800" height="6.200" rx="3" fill="#bcbcbc" opacity=".6"/><path d="M769.4 475.700v2M771.600 474.400v3.400M773.800 474.400v3.400M776 474.400v3.400M778.200 474.400v3.400M780.400 474.400v3.400M782.600 474.400v3.400M784.800 475.400v2.400" stroke="#a0a0a0" stroke-width=".5" fill="none"/><path d="M773.800 483.300h8.400l.5 4.800q1.700 4.200 2.100 8.400h-13.600q.4-4.200 2.100-8.400z" fill="#9e9e9e"/><path d="M777.400 492.500l-.8 4h1.600z" fill="#5a5a5a"/><circle cx="771.900" cy="484.500" r="1.400" fill="#bdbdbd"/><circle cx="786" cy="488.400" r="1.600" fill="#c6c6c6"/><path d="M768 483.500h3" stroke="#8a8a8a" stroke-width=".8"/><g fill="none" stroke="#b4b4b4" stroke-width="1.100"><path d="M797.100 476.900h8.700M801.300 476.900v10.200M807 476.900h8M811.300 476.900v10.200"/></g><g fill="none" stroke="#8c8c8c" stroke-width=".7"><path d="M797.600 493.400h4M799.600 493.400v3M803.600 493.400h4M805.600 493.400v3M810.600 493h3.400v3h-3.400z"/><rect x="796.200" y="488" width="2.600" height="2.600"/></g></g>
<text x="792.6" y="485.6" font-size="4.6" fill="#7c7c7c" opacity=".8" text-anchor="start" >+ -</text>
<rect x="626.8" y="171" width="17.1" height="23.6" fill="#383838" rx=".8"/>
<rect x="626.8" y="171" width="17.1" height="6.2" fill="#2a2a2a" rx=".8"/>
<text x="630.4" y="176.2" font-size="4.6" fill="#b0b0b0" opacity=".8" text-anchor="start" >«</text>
<text x="638.2" y="176.4" font-size="5" fill="#b0b0b0" opacity=".8" text-anchor="start" >×</text>
<rect x="628.4" y="178.2" width="14" height="0.6" fill="#555" />
<path d="M633.4 190.6v-4.4l-1.4-1.8 1-.8 1.6 1.4v-1.6h1v1h1v.4h1v.6h1v5.2z" fill="#c4c4c4"/>
</g>
</svg>
<div class="shade-b"></div>
<div class="blk" style="top:0;height:27.8px"></div>
<div class="blk" style="top:556.8px;height:52px"></div>
<div class="handle"></div>
<div class="title"><span>22_7</span>月<span>29</span>日<span>-</span>脚部结构解析（直播<span class="d">2023.07.29</span>）<span class="e">.mp4</span></div>
<div class="hi"><b>Hi</b></div>
<svg class="ic" id="icons" width="932" height="608" viewBox="0 0 932 608" style="left:0;top:0" fill="none" stroke="#fff" stroke-width="1.7" stroke-linecap="round" stroke-linejoin="round">
<g>
<circle cx="600.6" cy="25.7" r="2.5"/><circle cx="611.5" cy="20.6" r="2.5"/><circle cx="611.5" cy="31.1" r="2.5"/>
<path d="M602.9 24.6L609.2 21.7M602.9 26.8L609.2 30"/>
</g>
<path d="M649.9 17.2V30.4M643.6 24.4L649.9 30.6L656.3 24.4M641.9 29.4V31.4Q641.9 34.3 644.8 34.3H655.2Q658.1 34.3 658.1 31.4V29.4"/>
<g fill="#fff" stroke="none"><circle cx="686.3" cy="25.9" r="1.8"/><circle cx="694" cy="25.9" r="1.8"/><circle cx="701.8" cy="25.9" r="1.8"/></g>
<path d="M724.3 17.5V33" stroke="#555" stroke-width="1"/>
<path d="M759.9 24.6V21.4Q759.9 18.2 756.7 18.2H747.3Q744.1 18.2 744.1 21.4V29.6Q744.1 32.8 747.3 32.8H748.6"/>
<rect x="752.3" y="28.1" width="7.9" height="5.8" rx="1.6"/>
<path d="M747.4 20.8L751.8 25.2M751.9 21.6V25.3H748.2"/>
<path d="M803.6 16.6V35.4M803.6 19.5H795.6Q793.2 19.5 793.2 21.9V29.6Q793.2 32 795.6 32H803.6M788.6 25.9H793.2"/>
<path d="M28 573.8V592.2Q28 593.4 29.1 592.8L43 584Q44.2 583 43 582L29.1 573.2Q28 572.6 28 573.8Z" fill="#fff" stroke-width="3.4"/>
<path d="M83.9 576.6V589.4" stroke-width="2.2"/>
<path d="M96.2 577V589L88.6 583Z" fill="#fff" stroke-width="2.4"/>
<path d="M140 576.6V589.4" stroke-width="2.2"/>
<path d="M127.7 577V589L135.3 583Z" fill="#fff" stroke-width="2.4"/>
<g stroke-width="2"><path d="M759.2 574.5H770.2M759.2 580.9H770.2M759.2 587.3H770.2"/></g>
<g fill="#fff" stroke="none"><circle cx="754.5" cy="574.5" r="1.4"/><circle cx="754.5" cy="580.9" r="1.4"/><circle cx="754.5" cy="587.3" r="1.4"/></g>
<path d="M801.7 580.9L805.4 574.4Q806 573.4 807.2 573.4H813Q814.2 573.4 814.8 574.4L818.5 580.9L814.8 587.4Q814.2 588.4 813 588.4H807.2Q806 588.4 805.4 587.4Z"/>
<circle cx="810.1" cy="580.9" r="3.3"/>
<path d="M858 574.6V587.4Q858 589 856.8 588L852.2 584.6H849.6Q848.3 584.6 848.3 583.3V578.7Q848.3 577.4 849.6 577.4H852.2L856.8 574Q858 573 858 574.6Z"/>
<path d="M861.5 577.8Q865.9 581 861.5 584.2M863 573.9Q871.4 581 863 588.2"/>
<g stroke-width="2"><path d="M894 578.3V576Q894 573 897 573H899.6M904.6 573H907Q910 573 910 576V578.3M910 583.5V585.8Q910 588.8 907 588.8H904.6M899.6 588.8H897Q894 588.8 894 585.8V583.5"/></g>
</svg>

<svg class="ic" width="932" height="608" viewBox="0 0 932 608" style="left:0;top:0" fill="none">
<defs>
<radialGradient id="helm" cx=".45" cy=".35" r=".75"><stop offset="0" stop-color="#fff"/><stop offset=".6" stop-color="#f7f8fc"/><stop offset="1" stop-color="#d9deee"/></radialGradient>
<radialGradient id="chk1" cx=".5" cy=".5" r=".5"><stop offset="0" stop-color="#f79aa0" stop-opacity=".95"/><stop offset="1" stop-color="#f9b0b0" stop-opacity="0"/></radialGradient>
<clipPath id="pill"><rect x="830" y="0" width="88.2" height="45.8" rx="17"/></clipPath>
</defs>
<path d="M932.6 302.8L927.2 309L932.6 315.2" stroke="#fff" stroke-width="2.1"/>
<path d="M903.7 25.6L907.2 29.2L903.7 32.8" stroke="#fff" stroke-width="1.6" stroke-linecap="round" stroke-linejoin="round"/>
<g clip-path="url(#pill)">
<path d="M848 46.5C847.6 41 851 37.4 858.6 37.4C866.2 37.4 869.6 41 869.2 46.5Z" fill="#f1f3fa"/>
<path d="M852.6 46C852.8 42.6 855 41 858.6 41C862.2 41 864.4 42.6 864.6 46Z" fill="#fff"/>
<rect x="855.4" y="42.6" width="6.4" height="2.2" rx="1.1" fill="#9fdcf2"/>
</g>
<path d="M858.6 5.9C869.4 5.9 876 12.6 878.2 22.8C880.2 31.6 873.6 36.7 858.6 36.7C843.6 36.7 837 31.6 839 22.8C841.2 12.6 847.8 5.9 858.6 5.9Z" fill="url(#helm)"/>
<ellipse cx="858.5" cy="26.8" rx="13" ry="7.8" fill="#fde9e3"/>
<path d="M846.4 24.6C849 19.4 854 18.4 858.5 18.4C863 18.4 868 19.4 870.6 24.6C867 21.6 862.6 21 858.5 21C854.4 21 850 21.6 846.4 24.6Z" fill="#fff"/>
<ellipse cx="850.2" cy="28.4" rx="5" ry="3.8" fill="url(#chk1)"/>
<ellipse cx="867" cy="28.4" rx="5" ry="3.8" fill="url(#chk1)"/>
<circle cx="855" cy="24.9" r="1.05" fill="#7a2c2c"/>
<circle cx="861.8" cy="24.9" r="1.05" fill="#7a2c2c"/>
<path d="M857.2 28.2Q858.4 29.6 859.7 28.2" stroke="#8a3434" stroke-width=".7" stroke-linecap="round"/>
</svg>
<div class="time" id="t1">02:06:01</div>
<div class="bar"><i></i></div>
<div class="time" id="t2">02:21:56</div>
<div class="ctl" style="left:545px">倍速</div>
<div class="ctl gold" style="left:596.2px">超清</div>
<div class="ctl" style="left:646.4px">字幕</div>
<div class="ctl" style="left:698.2px">查找</div>
<div class="svip" style="left:610px">SVIP</div>
<div class="svip" style="left:712px">SVIP</div>

</div>
</body>
</html>
